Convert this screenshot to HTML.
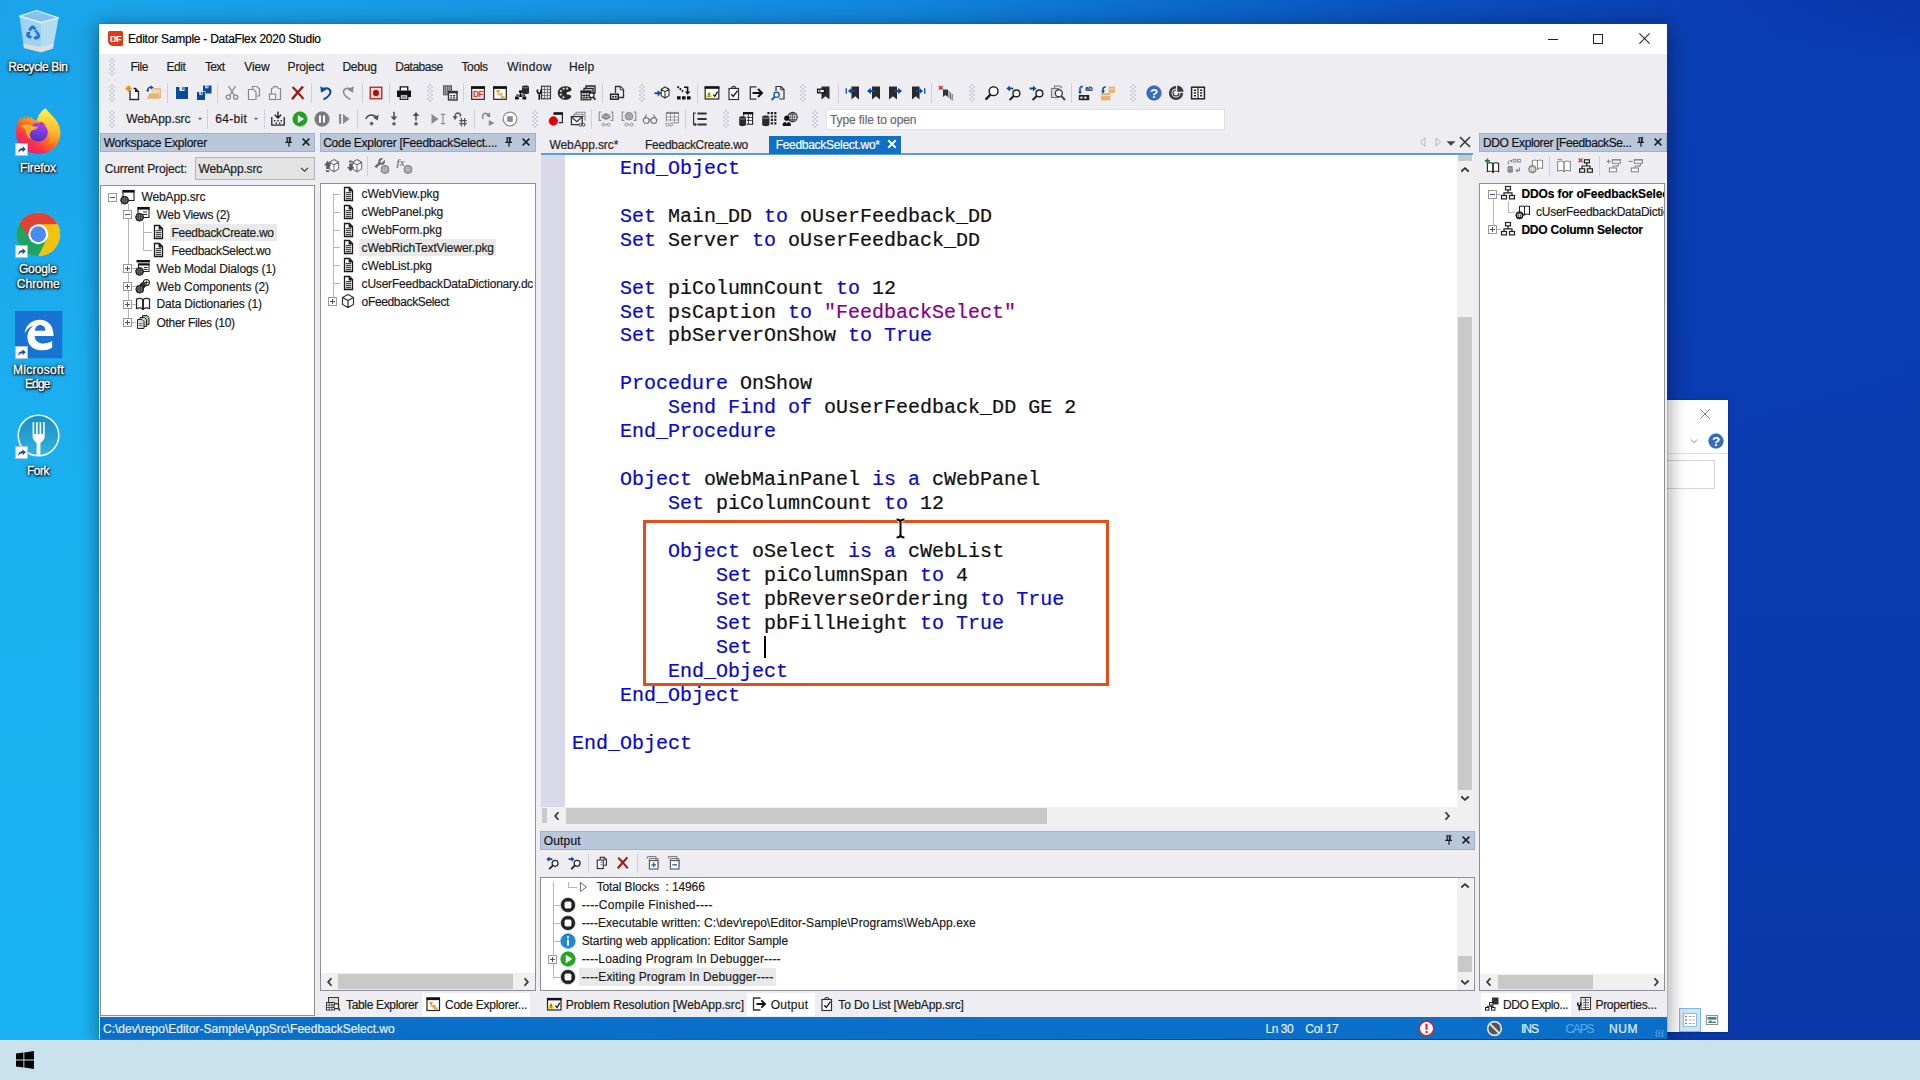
<!DOCTYPE html>
<html lang="en"><head><meta charset="utf-8"><title>Editor Sample - DataFlex 2020 Studio</title>
<style>
*{box-sizing:border-box;margin:0;padding:0}
html,body{width:1920px;height:1080px;overflow:hidden}
body{position:relative;font-family:"Liberation Sans",sans-serif;font-size:12px;color:#1a1a1a;
 background:#0b3fb4}
.b{position:absolute}
.t{position:absolute;white-space:nowrap;font-size:12px;-webkit-text-stroke:0.18px}
.ic{position:absolute;overflow:visible}
.code{position:absolute;font-family:"Liberation Mono",monospace;font-size:20px;line-height:23.967px;white-space:pre;color:#111;-webkit-text-stroke:0.22px}
.k{color:#0a0ac8}
.s{color:#8a008a}
.dl{color:#fff;font-size:12px;-webkit-text-stroke:0.35px;text-shadow:0 1px 2px #000,0 0 2px #000,1px 1px 2px rgba(0,0,0,.9),0 0 4px rgba(0,0,0,.6)}

</style></head>
<body>
<div class="b " style="left:0px;top:0px;width:1920px;height:1080px;background:linear-gradient(90deg,#1aa3e8 0px,#1aa5ea 100px,#1794e3 600px,#1286dc 900px,#0d72d0 1100px,#0a52be 1400px,#0a3eb2 1700px,#0a36aa 1920px)"></div>
<div class="b " style="left:0px;top:0px;width:300px;height:1080px;background:linear-gradient(180deg,rgba(30,170,236,0) 0,rgba(28,178,242,.9) 500px,rgba(26,180,244,1) 1080px)"></div>
<div class="b " style="left:1660px;top:0px;width:260px;height:1044px;background:linear-gradient(180deg,rgba(10,62,180,0) 0,rgba(10,62,180,.9) 70px,#0a3cb0 520px,#0a38a8 1044px)"></div>
<svg class="ic" style="left:18.5px;top:9.5px;width:40px;height:43px" viewBox="0 0 40 43"><path d="M0.6 6.1 L17.6 0.5 L39.5 7.9 L22 12.7 Z" fill="#86c2ea" stroke="#d4ecfa" stroke-width="1.3" stroke-linejoin="round"/><path d="M0.6 6.6 L22 13.2 L22 42.3 L5 37.9 Z" fill="#a2d2ef"/><path d="M22 13.2 L39.5 8.4 L33.9 38.6 L22 42.3 Z" fill="#b4dbf2"/><path d="M4 33.4 L22 37 L22 42.3 L5 37.9 Z" fill="#e6dcd8" opacity=".9"/><path d="M22 37 L34.8 33.6 L33.9 38.6 L22 42.3 Z" fill="#e2e0e2" opacity=".85"/><path d="M0.6 6.1 L22 12.7 L39.5 7.9" fill="none" stroke="#dcf0fb" stroke-width="1.5" stroke-linejoin="round"/><g fill="none" stroke="#1a74d6" stroke-width="2.8"><path d="M10.4 20.4 L12.6 17.4 Q13.8 16.4 15 17.8 L16.2 19.6"/><path d="M18.4 22.6 L19.6 25.6 Q19.8 27.6 17.8 27.8 L16 27.8"/><path d="M12.4 27.4 L9.6 26.6 Q8 25.8 8.8 24 L9.6 22.4"/></g><path d="M15 21.4 L18.6 19.4 L18.4 23.4 Z M17.2 25.4 L14.2 27.8 L17.2 30.2 Z M7.4 22.4 L11.4 21.6 L10.4 25.4 Z" fill="#1a74d6"/></svg>
<svg class="ic" style="left:15px;top:108px;width:46px;height:46px" viewBox="0 0 46 46"><defs><linearGradient id="ffg" x1=".85" y1=".05" x2=".2" y2=".95"><stop offset="0" stop-color="#fff44f"/><stop offset=".28" stop-color="#ffbd2e"/><stop offset=".52" stop-color="#ff7a1a"/><stop offset=".78" stop-color="#f8304a"/><stop offset="1" stop-color="#e81e8a"/></linearGradient><linearGradient id="ffp" x1=".6" y1="0" x2=".4" y2="1"><stop offset="0" stop-color="#c03af0"/><stop offset=".5" stop-color="#7a3ae0"/><stop offset="1" stop-color="#4a34b8"/></linearGradient><linearGradient id="ffy" x1=".5" y1="0" x2=".5" y2="1"><stop offset="0" stop-color="#fff44f"/><stop offset=".6" stop-color="#ffc02e"/><stop offset="1" stop-color="#ff8a1e" stop-opacity=".6"/></linearGradient></defs><path d="M30.4 0.2 C33 4 37 7 40 11 C44 16 46.5 22 45 29 C43 39 34 46 23 46 C11 46 1 37 1 25 C1 18 3 13 6 9 L7.5 11.5 L9.2 8 L11 11 L13 8 L14.6 10.8 L16.2 8.4 C17 11 19 12.4 22 12.6 C23 8 26 3 30.4 0.2 Z" fill="url(#ffg)"/><circle cx="23.3" cy="24" r="9.6" fill="url(#ffp)"/><path d="M30.4 0.2 C33 4 37 7 40 11 C44 16 45.5 22 44 28 C42 33 38 36 33 36 C35 32 35 24 31 19 C28 15 24 14 22 12.6 C23 8 26 3 30.4 0.2 Z" fill="url(#ffy)" opacity=".9"/><path d="M6 18 C10 16 15 16 18 18 C20 19 22 19 23.6 18.4 C22.4 21 19 21.4 17 22.6 C14 24.4 14.4 28 16 31 C12 29 10.4 25 10.8 22 C9.4 20.6 7.6 19.4 6 18 Z" fill="#ffb02a" opacity=".95"/><path d="M24 13.5 C27 13.6 30 15.2 31.4 17.6 C29.6 16.6 27.6 16.4 26.2 16.8 C26 15.4 25.2 14.2 24 13.5 Z" fill="#5a1a8a" opacity=".55"/></svg>
<svg class="ic" style="left:14.5px;top:143px;width:13px;height:13px" viewBox="0 0 12 12"><rect x=".5" y=".5" width="11" height="11" fill="#fff" stroke="#b8c4cc" stroke-width=".8"/><path d="M3 9.5 C3 6 4.6 4.8 7 4.8 V3 L10 5.8 L7 8.6 V6.8 C5.4 6.8 4.2 7.4 3 9.5 Z" fill="#1a4ea0"/></svg>
<svg class="ic" style="left:16px;top:212px;width:44.5px;height:44.5px" viewBox="0 0 44 44"><circle cx="22" cy="22" r="21.5" fill="#fff"/><path d="M3.38 11.25 A21.5 21.5 0 0 1 40.62 11.25 L22 22 Z" fill="#db4437"/><path d="M40.62 11.25 A21.5 21.5 0 0 1 22.00 43.50 L22 22 Z" fill="#f4c20d"/><path d="M22.00 43.50 A21.5 21.5 0 0 1 3.38 11.25 L22 22 Z" fill="#1da462"/><path d="M22 12.2 H40.9 A21.5 21.5 0 0 0 3.38 11.25 L13.51 26.90 Z" fill="#db4437"/><path d="M30.49 26.90 L22.00 43.50 A21.5 21.5 0 0 0 40.9 12.2 H22 Z" fill="#f4c20d"/><path d="M13.51 26.90 L3.38 11.25 A21.5 21.5 0 0 0 22.00 43.50 L30.49 26.90 Z" fill="#1da462"/><circle cx="22" cy="22" r="9.8" fill="#fff"/><circle cx="22" cy="22" r="7.8" fill="#4a8af4"/></svg>
<svg class="ic" style="left:14.5px;top:245px;width:13px;height:13px" viewBox="0 0 12 12"><rect x=".5" y=".5" width="11" height="11" fill="#fff" stroke="#b8c4cc" stroke-width=".8"/><path d="M3 9.5 C3 6 4.6 4.8 7 4.8 V3 L10 5.8 L7 8.6 V6.8 C5.4 6.8 4.2 7.4 3 9.5 Z" fill="#1a4ea0"/></svg>
<svg class="ic" style="left:14.8px;top:310.5px;width:47.2px;height:47.2px" viewBox="0 0 47 47"><rect width="47" height="47" fill="#1873d3"/><path d="M9.5 22.5 C11 12 18.5 8.6 24.6 8.6 C33 8.6 38.6 14.6 38.4 24.8 H19.6 C19.8 29.6 23.6 32.4 28.2 32.4 C31.6 32.4 34.6 31.4 37 30 V36.6 C34.2 38.2 30.6 39.2 26.2 39.2 C18 39.2 12.4 33.8 12.4 26 C12.4 21 15 17 18.6 14.6 C14.4 15.6 11.4 18.6 9.5 22.5 Z M19.8 19.6 H30.4 C30.2 16.2 28.2 14 25 14 C22 14 20.2 16.4 19.8 19.6 Z" fill="#fff"/></svg>
<svg class="ic" style="left:14.5px;top:346px;width:13px;height:13px" viewBox="0 0 12 12"><rect x=".5" y=".5" width="11" height="11" fill="#fff" stroke="#b8c4cc" stroke-width=".8"/><path d="M3 9.5 C3 6 4.6 4.8 7 4.8 V3 L10 5.8 L7 8.6 V6.8 C5.4 6.8 4.2 7.4 3 9.5 Z" fill="#1a4ea0"/></svg>
<svg class="ic" style="left:17.4px;top:413.5px;width:43px;height:43px" viewBox="0 0 43 43"><defs><linearGradient id="fkg" x1="0" y1="0" x2="0" y2="1"><stop offset="0" stop-color="#1a8ec4"/><stop offset="1" stop-color="#2fb4e0"/></linearGradient></defs><circle cx="21.5" cy="21.5" r="20.3" fill="url(#fkg)" stroke="#e8f6fc" stroke-width="1.6"/><path d="M15.6 8 h1.6 v12 h1.9 V8 h1.6 v12 h1.9 V8 h1.6 v12 h1.9 V8 h1.6 V22 C27.8 26.5 24 27.5 23.4 29.5 V42 H19.6 V29.5 C19 27.5 15.6 26.5 15.6 22 Z" fill="#fff"/></svg>
<svg class="ic" style="left:14.5px;top:446px;width:13px;height:13px" viewBox="0 0 12 12"><rect x=".5" y=".5" width="11" height="11" fill="#fff" stroke="#b8c4cc" stroke-width=".8"/><path d="M3 9.5 C3 6 4.6 4.8 7 4.8 V3 L10 5.8 L7 8.6 V6.8 C5.4 6.8 4.2 7.4 3 9.5 Z" fill="#1a4ea0"/></svg>
<div class="t dl" style="left:8.3px;top:60.05px;height:15px;line-height:15px;letter-spacing:-0.37px;">Recycle Bin</div>
<div class="t dl" style="left:20px;top:160.85px;height:15px;line-height:15px;letter-spacing:-0.11px;">Firefox</div>
<div class="t dl" style="left:18.9px;top:262.35px;height:15px;line-height:15px;letter-spacing:-0.12px;">Google</div>
<div class="t dl" style="left:16.7px;top:276.65px;height:15px;line-height:15px;letter-spacing:0.06px;">Chrome</div>
<div class="t dl" style="left:13px;top:363.35px;height:15px;line-height:15px;letter-spacing:0.28px;">Microsoft</div>
<div class="t dl" style="left:25px;top:377.35px;height:15px;line-height:15px;letter-spacing:-0.88px;">Edge</div>
<div class="t dl" style="left:26.9px;top:463.75px;height:15px;line-height:15px;letter-spacing:-0.43px;">Fork</div>
<div class="b " style="left:1667px;top:400px;width:60.5px;height:632px;background:#fff;box-shadow:0 0 3px rgba(0,0,40,.25)"></div>
<div class="b " style="left:1667px;top:453px;width:60.5px;height:1px;background:#e2e2e2"></div>
<div class="b " style="left:1667px;top:459.5px;width:48px;height:29px;background:#fff;border:1px solid #d4d4d4;border-left:0"></div>
<div class="b " style="left:1679px;top:1008px;width:22px;height:24px;background:#cfe6f7;border:1px solid #7ab8e6"></div>
<div class="b " style="left:99.3px;top:24.2px;width:1567.7px;height:1014.8px;background:#eeeef2;box-shadow:0 0 0 .5px rgba(10,90,180,.35),0 3px 18px 2px rgba(0,0,0,.38)"></div>
<div class="b " style="left:99.3px;top:24.2px;width:1567.7px;height:29.8px;background:#fff"></div>
<div class="t " style="left:128px;top:31.25px;height:16px;line-height:16px;color:#000;letter-spacing:-0.24px;">Editor Sample - DataFlex 2020 Studio</div>
<div class="t " style="left:130.4px;top:59.25px;height:16px;line-height:16px;color:#1a1a1a;letter-spacing:-0.45px;">File</div>
<div class="t " style="left:166.6px;top:59.25px;height:16px;line-height:16px;color:#1a1a1a;letter-spacing:-0.50px;">Edit</div>
<div class="t " style="left:204.9px;top:59.25px;height:16px;line-height:16px;color:#1a1a1a;letter-spacing:-0.61px;">Text</div>
<div class="t " style="left:244.3px;top:59.25px;height:16px;line-height:16px;color:#1a1a1a;letter-spacing:-0.17px;">View</div>
<div class="t " style="left:287.6px;top:59.25px;height:16px;line-height:16px;color:#1a1a1a;letter-spacing:-0.14px;">Project</div>
<div class="t " style="left:342.4px;top:59.25px;height:16px;line-height:16px;color:#1a1a1a;letter-spacing:-0.19px;">Debug</div>
<div class="t " style="left:395.3px;top:59.25px;height:16px;line-height:16px;color:#1a1a1a;letter-spacing:-0.51px;">Database</div>
<div class="t " style="left:461.4px;top:59.25px;height:16px;line-height:16px;color:#1a1a1a;letter-spacing:-0.33px;">Tools</div>
<div class="t " style="left:507.2px;top:59.25px;height:16px;line-height:16px;color:#1a1a1a;letter-spacing:0.30px;">Window</div>
<div class="t " style="left:569px;top:59.25px;height:16px;line-height:16px;color:#1a1a1a;letter-spacing:0.14px;">Help</div>
<div class="t " style="left:126.2px;top:111.45px;height:16px;line-height:16px;letter-spacing:-0.09px;">WebApp.src</div>
<div class="t " style="left:215.3px;top:111.45px;height:16px;line-height:16px;letter-spacing:0.29px;">64-bit</div>
<div class="b " style="left:826px;top:109px;width:399px;height:21px;background:#fff;border:1px solid #e0e0e6"></div>
<div class="t " style="left:830px;top:111.75px;height:16px;line-height:16px;color:#6a6a6a;letter-spacing:-0.10px;">Type file to open</div>
<div class="b " style="left:100px;top:1017px;width:1567px;height:22px;background:#0a6fc9"></div>
<div class="t " style="left:103px;top:1021.05px;height:16px;line-height:16px;color:#e6f1ff;letter-spacing:-0.01px;">C:\dev\repo\Editor-Sample\AppSrc\FeedbackSelect.wo</div>
<div class="t " style="left:1265.5px;top:1021.05px;height:16px;line-height:16px;color:#e6f1ff;letter-spacing:-0.46px;">Ln 30</div>
<div class="t " style="left:1305.2px;top:1021.05px;height:16px;line-height:16px;color:#e6f1ff;letter-spacing:-0.22px;">Col 17</div>
<div class="t " style="left:1521px;top:1021.05px;height:16px;line-height:16px;color:#e6f1ff;letter-spacing:-1.01px;">INS</div>
<div class="t " style="left:1565.4px;top:1021.05px;height:16px;line-height:16px;color:#58a6e6;letter-spacing:-1.20px;">CAPS</div>
<div class="t " style="left:1608.9px;top:1021.05px;height:16px;line-height:16px;color:#e6f1ff;letter-spacing:0.59px;">NUM</div>
<div class="b " style="left:109px;top:84px;width:6px;height:18px;background:repeating-conic-gradient(#cfcfd8 0 25%,transparent 0 50%) 0 0/4px 4px"></div>
<svg class="ic" style="left:124.9px;top:84.5px;width:16px;height:16px" viewBox="0 0 16 16" ><rect x="5" y="4" width="9" height="10.5" fill="#fff"/><path d="M5 5.5 V14.5 H13.5 V6.5 L10.5 3.5 H8.5" fill="none" stroke="#2a2a2a" stroke-width="1.3" /><path d="M10 3 L14 7 H10 Z" fill="#111" /><circle cx="3.6" cy="3.6" r="1.9" fill="#e89a3c" stroke="#e08a2a" stroke-width="0.6"/><path d="M3.6 0.4 V6.8 M0.4 3.6 H6.8 M1.3 1.3 L5.9 5.9 M5.9 1.3 L1.3 5.9" fill="none" stroke="#e08a2a" stroke-width="1" /></svg>
<svg class="ic" style="left:146.3px;top:84.5px;width:16px;height:16px" viewBox="0 0 16 16" ><path d="M5.5 3.5 H14.5 V13.5 H5.5 Z" fill="#f0d5ae" /><path d="M6.5 3.8 H14.3 V13.2" fill="none" stroke="#e0b070" stroke-width="1" /><path d="M0.8 13.8 L3.2 8.6 H12.2 L14.2 13.8 Z" fill="#e3b577" /><path d="M1.6 5.6 C1.6 2.6 4 1.8 5.6 2.4" fill="none" stroke="#0a4a9e" stroke-width="1.5" /><path d="M4.6 0.3 L7.6 2.5 L4.6 4.6 Z" fill="#0a4a9e" /><path d="M0.2 5 H3.2 L1.7 7.2 Z" fill="#0a4a9e" /></svg>
<div class="b " style="left:167px;top:83px;width:1px;height:20px;background:#d0d0d8"></div>
<svg class="ic" style="left:174.4px;top:84.5px;width:16px;height:16px" viewBox="0 0 16 16" ><path d="M2 2 H5.5 V6 H10.5 V2 H14 V14 H2 Z M8.2 2 H9.5 V5 H8.2 Z" fill="#0a4a9e" /></svg>
<svg class="ic" style="left:196px;top:84.5px;width:16px;height:16px" viewBox="0 0 16 16" ><path d="M7 0.5 H9.2 V3.2 H12.4 V0.5 H15.5 V8.5 H7 Z M10.6 0.5 H11.6 V2.4 H10.6 Z" fill="#0a4a9e" /><rect x="0.2" y="6.2" width="9.3" height="9.6" fill="#eeeef2"/><path d="M1 7 H3.2 V9.8 H6.6 V7 H9 V15 H1 Z M4.8 7 H5.8 V9 H4.8 Z" fill="#0a4a9e" /></svg>
<div class="b " style="left:217px;top:83px;width:1px;height:20px;background:#d0d0d8"></div>
<svg class="ic" style="left:224.2px;top:84.5px;width:16px;height:16px" viewBox="0 0 16 16" ><path d="M4.5 1 L10.2 10.2 M11.5 1 L5.8 10.2" fill="none" stroke="#8a8a8a" stroke-width="1.3" /><circle cx="4.3" cy="12.2" r="2.1" fill="none" stroke="#8a8a8a" stroke-width="1.3"/><circle cx="11.7" cy="12.2" r="2.1" fill="none" stroke="#8a8a8a" stroke-width="1.3"/></svg>
<svg class="ic" style="left:246.1px;top:84.5px;width:16px;height:16px" viewBox="0 0 16 16" ><path d="M6.5 4 V1.5 H11 L13.5 4 V11 H10.5" fill="none" stroke="#8a8a8a" stroke-width="1.2" /><rect x="3" y="4.5" width="7" height="10" fill="#f4f4f6"/><path d="M2.5 4.5 H7.5 L10 7 V14.5 H2.5 Z" fill="none" stroke="#8a8a8a" stroke-width="1.2" /></svg>
<svg class="ic" style="left:266.9px;top:84.5px;width:16px;height:16px" viewBox="0 0 16 16" ><path d="M5.5 3.5 H4.5 V9 M11.5 3.5 H13.5 V14.5 H9.5" fill="none" stroke="#8a8a8a" stroke-width="1.2" /><path d="M6 3.5 C6 0.6 11 0.6 11 3.5" fill="none" stroke="#8a8a8a" stroke-width="1.2" /><rect x="2.5" y="9" width="6" height="5.5" fill="#f4f4f6" stroke="#8a8a8a" stroke-width="1.2"/></svg>
<svg class="ic" style="left:289.7px;top:84.5px;width:16px;height:16px" viewBox="0 0 16 16" ><path d="M2.5 2 C6 5 10 10 13.5 14" fill="none" stroke="#a01414" stroke-width="2.2" /><path d="M13 1.5 C10 5 5.5 10 2 14.2" fill="none" stroke="#a01414" stroke-width="2.4" /></svg>
<div class="b " style="left:311px;top:83px;width:1px;height:20px;background:#d0d0d8"></div>
<svg class="ic" style="left:318.4px;top:84.5px;width:16px;height:16px" viewBox="0 0 16 16" ><path d="M4.2 4.6 C8 2.2 12.6 3.4 12.4 7.2 C12.2 10.4 9 12.6 5.5 14.4" fill="none" stroke="#0a4a9e" stroke-width="2" /><path d="M2.3 1.2 L3 7.8 L8.6 4.6 Z" fill="#0a4a9e" /></svg>
<svg class="ic" style="left:340.3px;top:84.5px;width:16px;height:16px" viewBox="0 0 16 16" ><path d="M11.8 4.6 C8 2.2 3.4 3.4 3.6 7.2 C3.8 10.4 7 12.6 10.5 14.4" fill="none" stroke="#8a8a8a" stroke-width="1.6" /><path d="M13.7 1.2 L13 7.8 L7.4 4.6 Z" fill="#8a8a8a" /></svg>
<div class="b " style="left:361.5px;top:83px;width:1px;height:20px;background:#d0d0d8"></div>
<svg class="ic" style="left:368.4px;top:84.5px;width:16px;height:16px" viewBox="0 0 16 16" ><rect x="2.2" y="2.2" width="11.6" height="11.6" fill="#f3d6d6" stroke="#a01414" stroke-width="1.2"/><circle cx="8" cy="8" r="2.9" fill="#a01414" stroke="#a01414" stroke-width="0.5"/></svg>
<div class="b " style="left:389.2px;top:83px;width:1px;height:20px;background:#d0d0d8"></div>
<svg class="ic" style="left:396.3px;top:84.5px;width:16px;height:16px" viewBox="0 0 16 16" ><rect x="4" y="1.5" width="8" height="4" fill="#fff"/><path d="M4.3 5.5 V1.8 H11.7 V5.5" fill="none" stroke="#111" stroke-width="1.3" /><path d="M1 5.5 H15 V12 H12 V9.5 H4 V12 H1 Z" fill="#111" /><rect x="4.2" y="9.7" width="7.6" height="4.6" fill="#fff" stroke="#111" stroke-width="1.2"/><path d="M5.5 12 H10.5" fill="none" stroke="#111" stroke-width="0.9" /></svg>
<div class="b " style="left:426.6px;top:84px;width:6px;height:18px;background:repeating-conic-gradient(#cfcfd8 0 25%,transparent 0 50%) 0 0/4px 4px"></div>
<svg class="ic" style="left:442.1px;top:84.5px;width:16px;height:16px" viewBox="0 0 16 16" ><rect x="1.5" y="0.8" width="8" height="9" fill="#9a9a9a" stroke="#555" stroke-width="1"/><path d="M3.5 1 V9.5 M5.5 1 V9.5 M7.5 1 V9.5" fill="none" stroke="#666" stroke-width="0.7" /><rect x="6.5" y="6.5" width="8.5" height="8.5" fill="#fff" stroke="#333" stroke-width="1.4"/><rect x="6" y="6" width="9.5" height="2.4" fill="#333"/><rect x="8.3" y="10" width="1.8" height="1.4" fill="#333"/><rect x="11" y="10" width="2.2" height="1.4" fill="#333"/><rect x="8.3" y="12.3" width="1.8" height="1.4" fill="#333"/><rect x="11" y="12.3" width="2.2" height="1.4" fill="#333"/></svg>
<div class="b " style="left:463.1px;top:83px;width:1px;height:20px;background:#d0d0d8"></div>
<svg class="ic" style="left:470.2px;top:84.5px;width:16px;height:16px" viewBox="0 0 16 16" ><rect x="1.7" y="2" width="12.6" height="12.3" fill="#fff" stroke="#222" stroke-width="1.2"/><rect x="1" y="1.3" width="14" height="2.6" fill="#111"/><rect x="3" y="5" width="10" height="8" fill="#fbe4dc"/><text x="8" y="12" text-anchor="middle" font-family="Liberation Sans,sans-serif" font-weight="bold" font-size="8.5" fill="#e03a14" letter-spacing="-0.6">DF</text></svg>
<svg class="ic" style="left:491.9px;top:84.5px;width:16px;height:16px" viewBox="0 0 16 16" ><rect x="1.7" y="2" width="12.6" height="12.3" fill="#fff" stroke="#222" stroke-width="1.2"/><rect x="1" y="1.3" width="14" height="2.6" fill="#111"/><path d="M4.5 5 h3.2v2.6h-3.2z M7.6 8.2 h3v2.4h-3z M10.2 11.2h2.4v2h-2.4z" fill="#e8a038" /><path d="M6 7.6 V9.4 H7.6 M9 10.6 V12.2 H10.2" fill="none" stroke="#c07818" stroke-width="0.8" /></svg>
<svg class="ic" style="left:513.8px;top:84.5px;width:16px;height:16px" viewBox="0 0 16 16" ><path d="M8 1.5 C8 0 15 0 15 1.5 V8 C15 9.5 8 9.5 8 8 Z" fill="#2a2a2a" /><path d="M8.3 2 C9 3.2 14 3.2 14.7 2" fill="none" stroke="#aaa" stroke-width="0.7" /><rect x="5" y="5.3" width="3.2" height="2.6" fill="#111"/><path d="M6.6 8 V10 M3 11.5 V10 H10.3 V11.5" fill="none" stroke="#111" stroke-width="1.1" /><path d="M1 11.5 h3.8v3h-3.8z M8.4 11.5 h3.8v3h-3.8z" fill="#111" /><path d="M4.8 12 L6.6 9 L8.4 12 Z" fill="#111" /></svg>
<svg class="ic" style="left:535.8px;top:84.5px;width:16px;height:16px" viewBox="0 0 16 16" ><rect x="5.5" y="1.2" width="9" height="12.6" fill="#e6e6e6" stroke="#333" stroke-width="1.1"/><path d="M8.5 1.2 V13.8 M11.5 1.2 V13.8 M5.5 4.5 H14.5 M5.5 7.5 H14.5 M5.5 10.5 H14.5" fill="none" stroke="#555" stroke-width="0.7" /><path d="M1.6 4.5 C0.8 7 2 8.2 3.3 8.6 V14.8 M3.3 8.6 C4.8 8.2 5.6 7 4.8 4.5" fill="none" stroke="#111" stroke-width="1.7" /></svg>
<svg class="ic" style="left:557.4px;top:84.5px;width:16px;height:16px" viewBox="0 0 16 16" ><path d="M8.2 1.2 C2.5 1.2 0.8 5.5 0.8 8 C0.8 11.5 4 14.8 8.2 14.8 C11 14.8 13.2 13.6 14 12.2 C14.6 11 13.4 9.6 12 9.8 C10.4 10 9.4 9.2 9.6 8 C9.8 6.8 11.4 7 12.6 6.6 C14.8 5.8 15 4.4 14 3.2 C12.8 1.8 10.6 1.2 8.2 1.2 Z" fill="#2a2a2a" /><circle cx="4" cy="6" r="1" fill="#ddd" stroke="#ddd" stroke-width="0.2"/><circle cx="6.6" cy="3.8" r="1" fill="#ddd" stroke="#ddd" stroke-width="0.2"/><circle cx="10" cy="3.6" r="1" fill="#ddd" stroke="#ddd" stroke-width="0.2"/><circle cx="3.8" cy="9.6" r="1" fill="#ddd" stroke="#ddd" stroke-width="0.2"/><circle cx="6.4" cy="12.2" r="1" fill="#ddd" stroke="#ddd" stroke-width="0.2"/></svg>
<svg class="ic" style="left:579.9px;top:84.5px;width:16px;height:16px" viewBox="0 0 16 16" ><path d="M6 3 V1 H15 V8 H13.5" fill="none" stroke="#222" stroke-width="1.3" /><path d="M4 5.5 V3.5 H13 V10" fill="none" stroke="#222" stroke-width="1.3" /><rect x="1.2" y="6.2" width="9.6" height="8.6" fill="#ddd" stroke="#222" stroke-width="1.2"/><rect x="0.6" y="5.6" width="10.8" height="2.4" fill="#222"/><path d="M4 8 V14.8 M6.8 8 V14.8 M1.2 10.5 H10.8 M1.2 12.7 H10.8" fill="none" stroke="#222" stroke-width="0.8" /><circle cx="11.6" cy="10.2" r="2.4" fill="#fff" stroke="#222" stroke-width="1.2"/><path d="M13.2 12 L15.4 14.8" fill="none" stroke="#222" stroke-width="1.7" /></svg>
<div class="b " style="left:601.5px;top:83px;width:1px;height:20px;background:#d0d0d8"></div>
<svg class="ic" style="left:608.9px;top:84.5px;width:16px;height:16px" viewBox="0 0 16 16" ><path d="M6.5 8 V1.5 H11.5 L14.5 4.5 V12.5 H10" fill="none" stroke="#333" stroke-width="1.3" /><path d="M11 1.5 V5 H14.5" fill="#fff" /><path d="M11.3 1.8 V4.8 H14.2" fill="none" stroke="#333" stroke-width="1" /><rect x="1.6" y="9.2" width="7.6" height="5" fill="#fff" stroke="#111" stroke-width="1.4"/><rect x="3.2" y="10.8" width="1.8" height="1.8" fill="#111"/><rect x="5.8" y="10.8" width="1.8" height="1.8" fill="#111"/></svg>
<div class="b " style="left:639px;top:84px;width:6px;height:18px;background:repeating-conic-gradient(#cfcfd8 0 25%,transparent 0 50%) 0 0/4px 4px"></div>
<svg class="ic" style="left:654px;top:84.5px;width:16px;height:16px" viewBox="0 0 16 16" ><path d="M0.5 8.2 H4.8" fill="none" stroke="#0a4a9e" stroke-width="1.8" /><path d="M3.6 5 L7.2 8.2 L3.6 11.4 Z" fill="#0a4a9e" /><rect x="8" y="4" width="7" height="9" fill="#fff"/><path d="M11 2 L15 4.2 V10.6 L11 13 L7.2 10.6 V4.2 Z M7.2 4.2 L11 6.6 L15 4.2 M11 6.6 V13" fill="none" stroke="#333" stroke-width="1.1" /></svg>
<svg class="ic" style="left:675.9px;top:84.5px;width:16px;height:16px" viewBox="0 0 16 16" ><path d="M1.5 1.5 L7 6.5" fill="none" stroke="#111" stroke-width="1.8" stroke-dasharray="1.8 1.2"/><path d="M8 2.2 H11.6 V7.5" fill="none" stroke="#111" stroke-width="1.6" /><path d="M8.8 6.6 H14.4 L11.6 9.8 Z" fill="#111" /><path d="M1 11.2 h3.6v3.2h-3.6z M6 11.2 h3.6v3.2h-3.6z M11 11.2 h3.6v3.2h-3.6z" fill="#111" /></svg>
<div class="b " style="left:697px;top:83px;width:1px;height:20px;background:#d0d0d8"></div>
<svg class="ic" style="left:704px;top:84.5px;width:16px;height:16px" viewBox="0 0 16 16" ><rect x="1.2" y="2" width="13.6" height="12" fill="#fff" stroke="#222" stroke-width="1.2"/><rect x="0.6" y="1.4" width="14.8" height="2.4" fill="#111"/><path d="M5 6 L8.4 12.6 H1.6 Z" fill="#f2d220" /><path d="M5 8.2 V10.4 M5 11.1 V12" fill="none" stroke="#222" stroke-width="1" /><path d="M9.2 9.6 L10.8 11.4 L13.6 6.6" fill="none" stroke="#222" stroke-width="1.4" /></svg>
<svg class="ic" style="left:726px;top:84.5px;width:16px;height:16px" viewBox="0 0 16 16" ><rect x="3" y="3.5" width="9.5" height="11" fill="#fff" stroke="#333" stroke-width="1.2"/><path d="M5.6 3.5 C5.6 0.7 9.9 0.7 9.9 3.5" fill="none" stroke="#333" stroke-width="1.2" /><path d="M5.3 9.3 L7.2 11.4 L11.6 5.6" fill="none" stroke="#222" stroke-width="1.5" /></svg>
<svg class="ic" style="left:747.6px;top:84.5px;width:16px;height:16px" viewBox="0 0 16 16" ><path d="M8.5 1.8 H2.3 V14.2 H8.5" fill="none" stroke="#333" stroke-width="1.3" /><path d="M4.5 8 H13.5 M10 4 L14 8 L10 12" fill="none" stroke="#111" stroke-width="2" /></svg>
<svg class="ic" style="left:769.6px;top:84.5px;width:16px;height:16px" viewBox="0 0 16 16" ><path d="M6 6 V1.5 H11 L14 4.5 V14 H9" fill="none" stroke="#333" stroke-width="1.2" /><path d="M10.8 1.8 V4.8 H13.8" fill="none" stroke="#333" stroke-width="1" /><circle cx="6.6" cy="9.8" r="2.6" fill="#fff" stroke="#1858b0" stroke-width="1.4"/><path d="M4.7 11.8 L1.6 15" fill="none" stroke="#1858b0" stroke-width="1.8" /></svg>
<div class="b " style="left:800.4px;top:84px;width:6px;height:18px;background:repeating-conic-gradient(#cfcfd8 0 25%,transparent 0 50%) 0 0/4px 4px"></div>
<svg class="ic" style="left:816px;top:84.5px;width:16px;height:16px" viewBox="0 0 16 16" ><path d="M5.5 1.5 H13.5 V14.5 L9.5 11.2 L5.5 14.5 Z" fill="#2a2a2a" /><rect x="1.6" y="4.2" width="6.8" height="3.6" fill="#fff" stroke="#111" stroke-width="1.3"/><rect x="3.2" y="5.2" width="1.2" height="1.6" fill="#111"/></svg>
<div class="b " style="left:837.5px;top:83px;width:1px;height:20px;background:#d0d0d8"></div>
<svg class="ic" style="left:844.5px;top:84.5px;width:16px;height:16px" viewBox="0 0 16 16" ><path d="M6.5 1.5 H14 V14.5 L10.2 11.2 L6.5 14.5 Z" fill="#2a2a2a" /><rect x="0.6" y="3.2" width="1.3" height="5.6" fill="#0a4a9e"/><path d="M3 6 L6.4 3 V4.9 H10 V7.1 H6.4 V9 Z" fill="#0a4a9e" /></svg>
<svg class="ic" style="left:866.4px;top:84.5px;width:16px;height:16px" viewBox="0 0 16 16" ><path d="M6 1.5 H14 V14.5 L10 11.2 L6 14.5 Z" fill="#2a2a2a" /><path d="M1 6 L4.8 2.8 V4.9 H9 V7.1 H4.8 V9.2 Z" fill="#0a4a9e" /></svg>
<svg class="ic" style="left:887.4px;top:84.5px;width:16px;height:16px" viewBox="0 0 16 16" ><path d="M2 1.5 H10 V14.5 L6 11.2 L2 14.5 Z" fill="#2a2a2a" /><path d="M15 6 L11.2 2.8 V4.9 H7 V7.1 H11.2 V9.2 Z" fill="#0a4a9e" /></svg>
<svg class="ic" style="left:909.7px;top:84.5px;width:16px;height:16px" viewBox="0 0 16 16" ><path d="M2 1.5 H9.5 V14.5 L5.8 11.2 L2 14.5 Z" fill="#2a2a2a" /><rect x="14.1" y="3.2" width="1.3" height="5.6" fill="#0a4a9e"/><path d="M13 6 L9.6 3 V4.9 H6 V7.1 H9.6 V9 Z" fill="#0a4a9e" /></svg>
<div class="b " style="left:931.1px;top:83px;width:1px;height:20px;background:#d0d0d8"></div>
<svg class="ic" style="left:938.1px;top:84.5px;width:16px;height:16px" viewBox="0 0 16 16" ><path d="M1 1 L4.6 4.6 M4.6 1 L1 4.6" fill="none" stroke="#d02020" stroke-width="1.4" /><path d="M5 4.5 H10 V12 L7.5 10 L5 12 Z" fill="#333" /><path d="M11 6 V13 M12.6 7.5 V14.5 M14.2 9 V15.5" fill="none" stroke="#555" stroke-width="0.9" /></svg>
<div class="b " style="left:969px;top:84px;width:6px;height:18px;background:repeating-conic-gradient(#cfcfd8 0 25%,transparent 0 50%) 0 0/4px 4px"></div>
<svg class="ic" style="left:984px;top:84.5px;width:16px;height:16px" viewBox="0 0 16 16" ><circle cx="9.6" cy="6.2" r="4.4" fill="#fff" stroke="#222" stroke-width="1.5"/><path d="M6.6 9.4 L1.6 14.6" fill="none" stroke="#222" stroke-width="2.4" /></svg>
<svg class="ic" style="left:1005.9px;top:84.5px;width:16px;height:16px" viewBox="0 0 16 16" ><circle cx="10.4" cy="8.4" r="3.4" fill="#fff" stroke="#222" stroke-width="1.4"/><path d="M8.0 10.8 L3.6 15" fill="none" stroke="#222" stroke-width="2" /><path d="M0.4 3.6 L3.8 0.6 V2.6 H7.2 V4.6 H3.8 V6.6 Z" fill="#0a4a9e" /></svg>
<svg class="ic" style="left:1028.5px;top:84.5px;width:16px;height:16px" viewBox="0 0 16 16" ><circle cx="10.4" cy="8.4" r="3.4" fill="#fff" stroke="#222" stroke-width="1.4"/><path d="M8.0 10.8 L3.6 15" fill="none" stroke="#222" stroke-width="2" /><path d="M7.4 3.6 L4 0.6 V2.6 H0.6 V4.6 H4 V6.6 Z" fill="#0a4a9e" /></svg>
<svg class="ic" style="left:1049.8px;top:84.5px;width:16px;height:16px" viewBox="0 0 16 16" ><path d="M4.5 3 V1 H10 L12 3" fill="none" stroke="#777" stroke-width="1.1" /><rect x="1.5" y="3.5" width="7" height="9" fill="#ddd" stroke="#777" stroke-width="1.1"/><circle cx="8.8" cy="8.2" r="3.5" fill="#fff" stroke="#444" stroke-width="1.4"/><path d="M11.2 10.8 L15 15" fill="none" stroke="#444" stroke-width="2" /></svg>
<div class="b " style="left:1070.9px;top:83px;width:1px;height:20px;background:#d0d0d8"></div>
<svg class="ic" style="left:1077.6px;top:84.5px;width:16px;height:16px" viewBox="0 0 16 16" ><path d="M2 8 V3.6 C2 2 3 1.6 5 1.6" fill="none" stroke="#0a4a9e" stroke-width="1.5" /><path d="M0 6.6 H4 L2 9.2 Z" fill="#0a4a9e" /><text x="11" y="6.4" text-anchor="middle" font-family="Liberation Sans,sans-serif" font-weight="bold" font-size="6.6" fill="#222">ab</text><rect x="0.8" y="10" width="10.4" height="5.2" fill="#222"/><rect x="2.4" y="11.6" width="2.2" height="2" fill="#eee"/><rect x="6.2" y="11.6" width="2.4" height="2" fill="#eee"/></svg>
<svg class="ic" style="left:1100.2px;top:84.5px;width:16px;height:16px" viewBox="0 0 16 16" ><path d="M8.5 1.5 H15 V8 H8.5 Z" fill="#e3b577" /><path d="M1 8 H10.5 V15.5 H1 Z" fill="#e3b577" /><path d="M8.5 4 H15 M1 10.5 H10.5" fill="none" stroke="#f3dcb8" stroke-width="0.9" /><path d="M3 7 V4.2 C3 2.6 4 2 5.8 2" fill="none" stroke="#0a4a9e" stroke-width="1.5" /><path d="M1 5.8 H5 L3 8.4 Z" fill="#0a4a9e" /></svg>
<div class="b " style="left:1130.4px;top:84px;width:6px;height:18px;background:repeating-conic-gradient(#cfcfd8 0 25%,transparent 0 50%) 0 0/4px 4px"></div>
<svg class="ic" style="left:1145.7px;top:84.5px;width:16px;height:16px" viewBox="0 0 16 16" ><circle cx="8" cy="8" r="7.3" fill="#3a6cbe" stroke="#2b5fb0" stroke-width="0.6"/><text x="8" y="13" text-anchor="middle" font-family="Liberation Sans,sans-serif" font-weight="bold" font-size="13.5" fill="#fff">?</text></svg>
<svg class="ic" style="left:1168px;top:84.5px;width:16px;height:16px" viewBox="0 0 16 16" ><path d="M8 2.2 A5.8 5.8 0 1 0 13.8 8" fill="none" stroke="#3a3a3a" stroke-width="2.6" /><path d="M8 5 A3 3 0 1 0 11 8" fill="none" stroke="#3a3a3a" stroke-width="1.2" /><path d="M9.2 0.6 A6.2 6.2 0 0 1 15.4 6.8 H9.2 Z" fill="#3a3a3a" /></svg>
<svg class="ic" style="left:1190px;top:84.5px;width:16px;height:16px" viewBox="0 0 16 16" ><rect x="1.6" y="2.2" width="12.8" height="11.6" fill="#fff" stroke="#222" stroke-width="1.5"/><path d="M8 2.2 V13.8" fill="none" stroke="#222" stroke-width="1.2" /><path d="M3.8 5.2 H6 M3.8 8 H6 M3.8 10.8 H6 M10 5.2 H12.2 M10 8 H12.2 M10 10.8 H12.2" fill="none" stroke="#222" stroke-width="1.5" /></svg>
<div class="b " style="left:109px;top:58px;width:6px;height:18px;background:repeating-conic-gradient(#cfcfd8 0 25%,transparent 0 50%) 0 0/4px 4px"></div>
<div class="b " style="left:109px;top:110px;width:6px;height:18px;background:repeating-conic-gradient(#cfcfd8 0 25%,transparent 0 50%) 0 0/4px 4px"></div>
<svg class="ic" style="left:194.8px;top:113.5px;width:10px;height:10px" viewBox="0 0 16 16" ><path d="M4.5 6 H11.5 L8 10 Z" fill="#6a6a6a" /></svg>
<div class="b " style="left:207.2px;top:109px;width:1px;height:20px;background:#d0d0d8"></div>
<svg class="ic" style="left:250.5px;top:113.5px;width:10px;height:10px" viewBox="0 0 16 16" ><path d="M4.5 6 H11.5 L8 10 Z" fill="#6a6a6a" /></svg>
<div class="b " style="left:263.5px;top:109px;width:1px;height:20px;background:#d0d0d8"></div>
<svg class="ic" style="left:269.7px;top:110.5px;width:16px;height:16px" viewBox="0 0 16 16" ><path d="M8 0.5 V6.5 M4.8 3.8 L8 7 L11.2 3.8" fill="none" stroke="#222" stroke-width="1.4" /><path d="M1.8 6 V14.2 H14.2 V6" fill="none" stroke="#222" stroke-width="1.3" /><path d="M4 9h1.4v1.4H4z M7.3 9h1.4v1.4H7.3z M10.6 9h1.4v1.4h-1.4z M5.6 11.5h1.4v1.4H5.6z M9 11.5h1.4v1.4H9z" fill="#222" /></svg>
<svg class="ic" style="left:292.2px;top:110.5px;width:16px;height:16px" viewBox="0 0 16 16" ><circle cx="8" cy="8" r="7.2" fill="#22a022" stroke="#1a9a1a" stroke-width="0.6"/><path d="M5.8 4 L12 8 L5.8 12 Z" fill="#fff" /></svg>
<svg class="ic" style="left:314.2px;top:110.5px;width:16px;height:16px" viewBox="0 0 16 16" ><circle cx="8" cy="8" r="7.4" fill="#7a7a7a" stroke="#7a7a7a" stroke-width="0.4"/><rect x="5" y="4.4" width="2" height="7.2" fill="#fff"/><rect x="9" y="4.4" width="2" height="7.2" fill="#fff"/></svg>
<svg class="ic" style="left:336.1px;top:110.5px;width:16px;height:16px" viewBox="0 0 16 16" ><rect x="3" y="3" width="2.2" height="10" fill="#8a8a8a"/><path d="M7 3 L13.5 8 L7 13 Z" fill="#8a8a8a" /></svg>
<div class="b " style="left:356.8px;top:109px;width:1px;height:20px;background:#d0d0d8"></div>
<svg class="ic" style="left:364.2px;top:110.5px;width:16px;height:16px" viewBox="0 0 16 16" ><path d="M2 8.2 C3 3.4 10.4 2.6 12.4 7" fill="none" stroke="#555" stroke-width="1.6" /><path d="M14.6 3.8 L13.8 9.6 L9 6.8 Z" fill="#555" /><circle cx="7.6" cy="12.6" r="1.5" fill="#555" stroke="#555" stroke-width="0.4"/></svg>
<svg class="ic" style="left:385.9px;top:110.5px;width:16px;height:16px" viewBox="0 0 16 16" ><path d="M8 0.8 V8" fill="none" stroke="#555" stroke-width="1.6" /><path d="M4.6 5.6 H11.4 L8 9.6 Z" fill="#555" /><circle cx="8" cy="12.8" r="1.5" fill="#555" stroke="#555" stroke-width="0.4"/></svg>
<svg class="ic" style="left:408.1px;top:110.5px;width:16px;height:16px" viewBox="0 0 16 16" ><path d="M8 9.4 V2.6" fill="none" stroke="#555" stroke-width="1.6" /><path d="M4.6 5 H11.4 L8 1 Z" fill="#555" /><circle cx="8" cy="12.8" r="1.5" fill="#555" stroke="#555" stroke-width="0.4"/></svg>
<svg class="ic" style="left:430.9px;top:110.5px;width:16px;height:16px" viewBox="0 0 16 16" ><path d="M0.5 3 L7.5 8 L0.5 13 Z" fill="#8a8a8a" /><path d="M9.8 3.4 H14.2 M9.8 12.6 H14.2 M12 3.4 V12.6" fill="none" stroke="#8a8a8a" stroke-width="1.1" /></svg>
<svg class="ic" style="left:452px;top:110.5px;width:16px;height:16px" viewBox="0 0 16 16" ><path d="M3.2 6.6 C2.2 3.4 5 1 7.4 2.4 C8.6 3.2 8.8 4.6 8.2 5.6" fill="none" stroke="#555" stroke-width="1.5" /><path d="M0.6 5 L5.6 5.4 L3 9 Z" fill="#555" /><path d="M9.4 7 V15.2 M12.6 7 V15.2 M7.4 9.6 H14.8 M7.4 12.6 H14.8" fill="none" stroke="#555" stroke-width="1.2" /></svg>
<div class="b " style="left:473.5px;top:109px;width:1px;height:20px;background:#d0d0d8"></div>
<svg class="ic" style="left:479.5px;top:110.5px;width:16px;height:16px" viewBox="0 0 16 16" ><path d="M3.2 8 C1.4 4 4 1.4 7 2.6 C8.6 3.4 9 4.6 8.6 6" fill="none" stroke="#8a8a8a" stroke-width="1.5" /><path d="M10 1.2 L10.2 6.4 L5.8 4.4 Z" fill="#8a8a8a" /><path d="M8.8 9 L14.4 12 L8.8 15 Z" fill="#8a8a8a" /></svg>
<svg class="ic" style="left:502px;top:110.5px;width:16px;height:16px" viewBox="0 0 16 16" ><circle cx="8" cy="8" r="6.8" fill="#fff" stroke="#8a8a8a" stroke-width="1.2"/><rect x="5.2" y="5.2" width="5.6" height="5.6" fill="#8a8a8a"/></svg>
<div class="b " style="left:532.3px;top:110px;width:6px;height:18px;background:repeating-conic-gradient(#cfcfd8 0 25%,transparent 0 50%) 0 0/4px 4px"></div>
<svg class="ic" style="left:547.6px;top:110.5px;width:16px;height:16px" viewBox="0 0 16 16" ><path d="M6 2.2 H14.4 V11.6 H11" fill="none" stroke="#222" stroke-width="1.2" /><rect x="5.4" y="1.4" width="9.6" height="2.4" fill="#111"/><circle cx="5.4" cy="10" r="4.4" fill="#e00000" stroke="#d80000" stroke-width="0.5"/></svg>
<svg class="ic" style="left:570px;top:110.5px;width:16px;height:16px" viewBox="0 0 16 16" ><path d="M6 3 V1.2 H15 V9.6" fill="none" stroke="#8a8a8a" stroke-width="1.1" /><path d="M4 5 V3.2 H13 V6" fill="none" stroke="#8a8a8a" stroke-width="1.1" /><rect x="1.4" y="5.6" width="10.8" height="8" fill="#f4f4f6" stroke="#333" stroke-width="1.3"/><path d="M1.6 6 L6.8 10.6 L12 6" fill="none" stroke="#333" stroke-width="1.2" /><circle cx="10.4" cy="13.8" r="1.4" fill="#eee" stroke="#333" stroke-width="0.9"/><circle cx="13.6" cy="13.8" r="1.4" fill="#eee" stroke="#333" stroke-width="0.9"/></svg>
<div class="b " style="left:591.1px;top:109px;width:1px;height:20px;background:#d0d0d8"></div>
<svg class="ic" style="left:598.2px;top:110.5px;width:16px;height:16px" viewBox="0 0 16 16" ><path d="M3.4 1 H1.2 V9.4 H3.4 M12.6 1 H14.8 V9.4 H12.6" fill="none" stroke="#8a8a8a" stroke-width="1.1" /><path d="M8 2 L12.4 4 V7 L8 9 L3.6 7 V4 Z" fill="#8a8a8a" /><path d="M3.6 4 L8 6 L12.4 4" fill="none" stroke="#ddd" stroke-width="0.7" /><circle cx="5.4" cy="13.6" r="1.5" fill="none" stroke="#8a8a8a" stroke-width="0.9"/><circle cx="10.6" cy="13.6" r="1.5" fill="none" stroke="#8a8a8a" stroke-width="0.9"/><path d="M6.9 13.6 H9.1" fill="none" stroke="#8a8a8a" stroke-width="0.8" /></svg>
<svg class="ic" style="left:620.7px;top:110.5px;width:16px;height:16px" viewBox="0 0 16 16" ><path d="M3.4 1 H1.2 V9.4 H3.4 M12.6 1 H14.8 V9.4 H12.6" fill="none" stroke="#8a8a8a" stroke-width="1.1" /><circle cx="8" cy="5.2" r="3.8" fill="#ccc" stroke="#8a8a8a" stroke-width="1"/><path d="M4.2 5.2 H11.8 M8 1.4 V9 M5 3.2 H11 M5 7.2 H11 M6.2 1.8 V8.6 M9.8 1.8 V8.6" fill="none" stroke="#8a8a8a" stroke-width="0.6" /><circle cx="5.4" cy="13.6" r="1.5" fill="none" stroke="#8a8a8a" stroke-width="0.9"/><circle cx="10.6" cy="13.6" r="1.5" fill="none" stroke="#8a8a8a" stroke-width="0.9"/><path d="M6.9 13.6 H9.1" fill="none" stroke="#8a8a8a" stroke-width="0.8" /></svg>
<svg class="ic" style="left:642px;top:110.5px;width:16px;height:16px" viewBox="0 0 16 16" ><circle cx="4.2" cy="9.6" r="2.9" fill="none" stroke="#777" stroke-width="1.2"/><circle cx="11.8" cy="9.6" r="2.9" fill="none" stroke="#777" stroke-width="1.2"/><path d="M7 9 Q8 8 9 9 M2.4 7.4 L4.6 3.4 M13.6 7.4 L11.4 3.4" fill="none" stroke="#777" stroke-width="1.1" /></svg>
<svg class="ic" style="left:663.7px;top:110.5px;width:16px;height:16px" viewBox="0 0 16 16" ><rect x="2.4" y="1.4" width="12" height="10.4" fill="#fff" stroke="#8a8a8a" stroke-width="1"/><rect x="2" y="1" width="12.8" height="2" fill="#8a8a8a"/><path d="M6.4 3 V11.8 M10.4 3 V11.8 M2.4 6 H14.4 M2.4 9 H14.4" fill="none" stroke="#8a8a8a" stroke-width="0.9" /><rect x="1.5" y="10.5" width="7" height="5.5" fill="#eeeef2"/><circle cx="3.4" cy="13.6" r="1.5" fill="none" stroke="#8a8a8a" stroke-width="0.9"/><circle cx="7" cy="13.6" r="1.5" fill="none" stroke="#8a8a8a" stroke-width="0.9"/></svg>
<div class="b " style="left:685px;top:109px;width:1px;height:20px;background:#d0d0d8"></div>
<svg class="ic" style="left:692px;top:110.5px;width:16px;height:16px" viewBox="0 0 16 16" ><path d="M5.4 2.6 H14.6 M5.4 8 H14.6 M5.4 13.4 H14.6" fill="none" stroke="#333" stroke-width="2" /><path d="M3.6 2.2 H1.6 V13.6 H3.6" fill="none" stroke="#333" stroke-width="1.2" /><path d="M2.6 11.6 L5 13.6 L2.6 15.6 Z" fill="#333" /></svg>
<div class="b " style="left:722.6px;top:110px;width:6px;height:18px;background:repeating-conic-gradient(#cfcfd8 0 25%,transparent 0 50%) 0 0/4px 4px"></div>
<svg class="ic" style="left:738px;top:110.5px;width:16px;height:16px" viewBox="0 0 16 16" ><rect x="5.6" y="1.6" width="9" height="11.6" fill="#fff" stroke="#222" stroke-width="1.1"/><rect x="5" y="1" width="10.2" height="2.4" fill="#111"/><path d="M10.4 3.4 V13.2 M5.6 6.4 H14.6 M5.6 9.4 H14.6" fill="none" stroke="#222" stroke-width="0.9" /><rect x="0.6" y="4.6" width="8" height="10.8" fill="#eeeef2"/><path d="M1.2 6.6000000000000005 C1.2 4.800000000000001 8.0 4.800000000000001 8.0 6.6000000000000005 V13.8 C8.0 15.6 1.2 15.6 1.2 13.8 Z" fill="#2a2a2a" /><path d="M1.5 7.2 C2.2 8.4 7.0 8.4 7.7 7.2" fill="none" stroke="#bbb" stroke-width="0.7" /></svg>
<svg class="ic" style="left:760.5px;top:110.5px;width:16px;height:16px" viewBox="0 0 16 16" ><path d="M6.4 1h2.2v2.2H6.4z M9.8 1h2.2v2.2H9.8z M13.2 1h2.2v2.2h-2.2z M9.8 4.4h2.2v2.2H9.8z M13.2 4.4h2.2v2.2h-2.2z M9.8 7.8h2.2V10H9.8z M13.2 7.8h2.2V10h-2.2z M9.8 11.2h2.2v2.2H9.8z M13.2 11.2h2.2v2.2h-2.2z" fill="#222" /><rect x="0.6" y="3.8" width="8.4" height="11.6" fill="#eeeef2"/><path d="M1.2 5.8 C1.2 3.9999999999999996 8.4 3.9999999999999996 8.4 5.8 V13.8 C8.4 15.6 1.2 15.6 1.2 13.8 Z" fill="#2a2a2a" /><path d="M1.5 6.3999999999999995 C2.2 7.6 7.4 7.6 8.1 6.3999999999999995" fill="none" stroke="#bbb" stroke-width="0.7" /></svg>
<svg class="ic" style="left:782.2px;top:110.5px;width:16px;height:16px" viewBox="0 0 16 16" ><circle cx="10.6" cy="6" r="4.6" fill="#fff" stroke="#333" stroke-width="1.2"/><path d="M6 6 H15.2 M10.6 1.4 V10.6 M7.2 3.4 H14 M7.2 8.6 H14 M10.6 1.4 C8 3.4 8 8.6 10.6 10.6 M10.6 1.4 C13.2 3.4 13.2 8.6 10.6 10.6" fill="none" stroke="#333" stroke-width="0.7" /><circle cx="4.8" cy="7.2" r="2.5" fill="#111" stroke="#111" stroke-width="0.4"/><path d="M0.8 15 V12.6 C0.8 10.4 8.8 10.4 8.8 12.6 V15 Z" fill="#111" /><path d="M3.6 10.6 L4.8 12.8 L6 10.6 Z" fill="#fff" /></svg>
<div class="b " style="left:812.4px;top:110px;width:6px;height:18px;background:repeating-conic-gradient(#cfcfd8 0 25%,transparent 0 50%) 0 0/4px 4px"></div>
<svg class="ic" style="left:324.25px;top:157.5px;width:16px;height:16px" viewBox="0 0 16 16" ><rect x="6" y="4" width="8" height="9" fill="#fff"/><path d="M10 1.6 L14.6 4.2 V11 L10 13.8 L5.6 11 V4.2 Z M5.6 4.2 L10 6.8 L14.6 4.2 M10 6.8 V13.8" fill="none" stroke="#787878" stroke-width="1.15" /><path d="M0 7.4 L3.6 2.8 L7.2 7.4 H5 V11 H2.2 V7.4 Z" fill="#5c5c5c" /><rect x="2" y="12.2" width="3.2" height="1.8" fill="#5c5c5c"/></svg>
<svg class="ic" style="left:346.5px;top:157.5px;width:16px;height:16px" viewBox="0 0 16 16" ><rect x="6" y="4" width="8" height="9" fill="#fff"/><path d="M10 1.6 L14.6 4.2 V11 L10 13.8 L5.6 11 V4.2 Z M5.6 4.2 L10 6.8 L14.6 4.2 M10 6.8 V13.8" fill="none" stroke="#787878" stroke-width="1.15" /><path d="M0 9 L3.6 13.6 L7.2 9 H5 V5.6 H2.2 V9 Z" fill="#5c5c5c" /><rect x="2" y="2.6" width="3.2" height="1.8" fill="#5c5c5c"/></svg>
<svg class="ic" style="left:374.25px;top:157.5px;width:16px;height:16px" viewBox="0 0 16 16" ><path d="M1.4 9.4 L6.2 4.6" fill="none" stroke="#6a6a6a" stroke-width="2.6" /><circle cx="7.6" cy="3.4" r="2.3" fill="none" stroke="#6a6a6a" stroke-width="2.1"/><path d="M7.8 3.2 L11.4 -0.4" fill="none" stroke="#eeeef2" stroke-width="2.2" /><circle cx="11" cy="11.4" r="4" fill="#8c8c8c" stroke="#6e6e6e" stroke-width="0.9"/><path d="M7 11.4 H15 M11 7.4 V15.4 M7.6 9.9 H14.4 M7.6 12.9 H14.4 M9.4 7.7 V15.1 M12.6 7.7 V15.1" fill="none" stroke="#d0d0d0" stroke-width="0.55" /></svg>
<svg class="ic" style="left:396.75px;top:157.5px;width:16px;height:16px" viewBox="0 0 16 16" ><text x="-0.5" y="8" font-family="Liberation Serif,serif" font-style="italic" font-weight="bold" font-size="10" fill="#7a7a7a">fx</text><circle cx="11" cy="11.4" r="4" fill="#8c8c8c" stroke="#6e6e6e" stroke-width="0.9"/><path d="M7 11.4 H15 M11 7.4 V15.4 M7.6 9.9 H14.4 M7.6 12.9 H14.4 M9.4 7.7 V15.1 M12.6 7.7 V15.1" fill="none" stroke="#d0d0d0" stroke-width="0.55" /></svg>
<div class="b " style="left:367.1px;top:156px;width:1px;height:20px;background:#d0d0d8"></div>
<svg class="ic" style="left:1483.7px;top:157.5px;width:16px;height:16px" viewBox="0 0 16 16" ><rect x="3" y="4.5" width="12" height="9" fill="#fff"/><path d="M9 5.6 C8 4.6 5 4.6 3.4 5.2 V13.6 C5 13 8 13 9 14 C10 13 13 13 14.6 13.6 V5.2 C13 4.6 10 4.6 9 5.6 Z" fill="none" stroke="#222" stroke-width="1.1" /><path d="M9 5.6 V14.4" fill="none" stroke="#111" stroke-width="1.6" /><path d="M3.4 0.4 V5.4 M0.9 2.9 H5.9" fill="none" stroke="#1a8a1a" stroke-width="1.7" /></svg>
<svg class="ic" style="left:1506px;top:157.5px;width:16px;height:16px" viewBox="0 0 16 16" ><path d="M1.4 9.399999999999999 C1.4 7.6 7.0 7.6 7.0 9.399999999999999 V13.6 C7.0 15.399999999999999 1.4 15.399999999999999 1.4 13.6 Z" fill="#8a8a8a" /><path d="M1.7 10.0 C2.4 11.2 6.0 11.2 6.7 10.0" fill="none" stroke="#bbb" stroke-width="0.7" /><path d="M5.4 4.4 V2.6 H3.6 M2.4 6.4 V3" fill="none" stroke="#8a8a8a" stroke-width="1.1" /><rect x="7.2" y="1.4" width="2.8" height="2.6" fill="none" stroke="#8a8a8a" stroke-width="1"/><rect x="11.6" y="1.4" width="2.8" height="2.6" fill="none" stroke="#8a8a8a" stroke-width="1"/><path d="M13.4 9.6 V12.6 H10.4 M11.6 11.2 L10.2 12.6 L11.6 14" fill="none" stroke="#8a8a8a" stroke-width="1.1" /></svg>
<svg class="ic" style="left:1527.5px;top:157.5px;width:16px;height:16px" viewBox="0 0 16 16" ><rect x="4" y="1.5" width="11" height="10" fill="#fff"/><path d="M9.5 2.8 C8.5 2 6 2 4.5 2.5 V10.5 M9.5 11 C10.5 10 13 10 14.5 10.5 V2.5 C13 2 10.5 2 9.5 2.8 Z" fill="none" stroke="#8a8a8a" stroke-width="1.1" /><circle cx="4.4" cy="11.2" r="3.7" fill="#aaa" stroke="#777" stroke-width="1"/><path d="M2.7 12.9 V10.2 Q3.5 9.5 4.4 10.3 V12.9 M4.4 10.3 Q5.3 9.5 6.1 10.3 V12.9" fill="none" stroke="#fff" stroke-width="0.8" /></svg>
<svg class="ic" style="left:1555.6px;top:157.5px;width:16px;height:16px" viewBox="0 0 16 16" ><rect x="1" y="2.5" width="14" height="11" fill="#fff"/><path d="M8 4 C6.8 3 3.4 3 1.6 3.6 V13 C3.4 12.4 6.8 12.4 8 13.6 C9.2 12.4 12.6 12.4 14.4 13 V3.6 C12.6 3 9.2 3 8 4 Z" fill="none" stroke="#8a8a8a" stroke-width="1.1" /><path d="M8 4 V13.6" fill="none" stroke="#777" stroke-width="1.3" /><path d="M1.6 1.4 H6" fill="none" stroke="#8a8a8a" stroke-width="1" /></svg>
<svg class="ic" style="left:1577.5px;top:157.5px;width:16px;height:16px" viewBox="0 0 16 16" ><path d="M0.6 0.4 L4.4 4.2 M4.4 0.4 L0.6 4.2" fill="none" stroke="#d02020" stroke-width="1.3" /><rect x="6.4" y="1.8" width="5" height="3" fill="#fff" stroke="#222" stroke-width="1.2"/><rect x="1.6" y="10.8" width="5" height="3.4" fill="#fff" stroke="#222" stroke-width="1.2"/><rect x="9.4" y="10.8" width="5" height="3.4" fill="#fff" stroke="#222" stroke-width="1.2"/><path d="M8.8 4.8 V8 M4 10.8 V8 H12 V10.8" fill="none" stroke="#222" stroke-width="1.2" /></svg>
<svg class="ic" style="left:1605.9px;top:157.5px;width:16px;height:16px" viewBox="0 0 16 16" ><path d="M0.6 3.4 H4.6 M2.6 1.4 V5.4" fill="none" stroke="#8a8a8a" stroke-width="1.1" /><rect x="6.4" y="1.6" width="8" height="3.6" fill="#fff" stroke="#8a8a8a" stroke-width="1.1"/><rect x="3.4" y="10" width="7" height="3.8" fill="#fff" stroke="#8a8a8a" stroke-width="1.1"/><path d="M12.4 5.2 V8 H10.4 M7 10 V8 H12" fill="none" stroke="#8a8a8a" stroke-width="1" /><rect x="6.4" y="1.2" width="8" height="1.4" fill="#8a8a8a"/></svg>
<svg class="ic" style="left:1628.3px;top:157.5px;width:16px;height:16px" viewBox="0 0 16 16" ><path d="M0.6 3.4 H4.6" fill="none" stroke="#8a8a8a" stroke-width="1.1" /><rect x="6.4" y="1.6" width="8" height="3.6" fill="#fff" stroke="#8a8a8a" stroke-width="1.1"/><rect x="3.4" y="10" width="7" height="3.8" fill="#fff" stroke="#8a8a8a" stroke-width="1.1"/><path d="M12.4 5.2 V8 H10.4 M7 10 V8 H12" fill="none" stroke="#8a8a8a" stroke-width="1" /><rect x="6.4" y="1.2" width="8" height="1.4" fill="#8a8a8a"/></svg>
<div class="b " style="left:1549px;top:156px;width:1px;height:20px;background:#d0d0d8"></div>
<div class="b " style="left:1599px;top:156px;width:1px;height:20px;background:#d0d0d8"></div>
<svg class="ic" style="left:545.7px;top:856.3px;width:14px;height:14px" viewBox="0 0 16 16" ><circle cx="10.4" cy="8.4" r="3.4" fill="#fff" stroke="#222" stroke-width="1.4"/><path d="M8.0 10.8 L3.6 15" fill="none" stroke="#222" stroke-width="2" /><path d="M0.4 3.6 L3.8 0.6 V2.6 H7.2 V4.6 H3.8 V6.6 Z" fill="#0a4a9e" /></svg>
<svg class="ic" style="left:567.7px;top:856.3px;width:14px;height:14px" viewBox="0 0 16 16" ><circle cx="10.4" cy="8.4" r="3.4" fill="#fff" stroke="#222" stroke-width="1.4"/><path d="M8.0 10.8 L3.6 15" fill="none" stroke="#222" stroke-width="2" /><path d="M7.4 3.6 L4 0.6 V2.6 H0.6 V4.6 H4 V6.6 Z" fill="#0a4a9e" /></svg>
<svg class="ic" style="left:595px;top:856.3px;width:14px;height:14px" viewBox="0 0 16 16" ><path d="M6 4 V1.4 H10.4 L13 4 V10.6 H10" fill="none" stroke="#222" stroke-width="1.2" /><path d="M10.2 1.6 V4.2 H12.8" fill="none" stroke="#222" stroke-width="0.9" /><rect x="2.6" y="4.6" width="6.8" height="9.8" fill="#fff" stroke="#222" stroke-width="1.2"/><path d="M6.4 7.4 H8 M6.4 9.6 H8" fill="none" stroke="#222" stroke-width="0.8" /></svg>
<svg class="ic" style="left:616.3px;top:856.3px;width:14px;height:14px" viewBox="0 0 16 16" ><path d="M2.5 2 C6 5 10 10 13.5 14" fill="none" stroke="#a01414" stroke-width="2.2" /><path d="M13 1.5 C10 5 5.5 10 2 14.2" fill="none" stroke="#a01414" stroke-width="2.4" /></svg>
<svg class="ic" style="left:643.7px;top:855.3px;width:16px;height:16px" viewBox="0 0 16 16" ><path d="M3.4 3.6 V1.6 H12 V9.6" fill="none" stroke="#777" stroke-width="1" /><path d="M5.4 5.6 V3.6 H14 V11.6 H12" fill="none" stroke="#777" stroke-width="1" /><rect x="5.4" y="5.6" width="8.6" height="8.4" fill="#fff" stroke="#555" stroke-width="1.1"/><path d="M7.4 9.8 H12 M9.7 7.5 V12.1" fill="none" stroke="#1858b0" stroke-width="1.3" /></svg>
<svg class="ic" style="left:665.3px;top:855.3px;width:16px;height:16px" viewBox="0 0 16 16" ><path d="M3.4 3.6 V1.6 H12 V9.6" fill="none" stroke="#777" stroke-width="1" /><path d="M5.4 5.6 V3.6 H14 V11.6 H12" fill="none" stroke="#777" stroke-width="1" /><rect x="5.4" y="5.6" width="8.6" height="8.4" fill="#fff" stroke="#555" stroke-width="1.1"/><path d="M7.4 9.8 H12" fill="none" stroke="#1858b0" stroke-width="1.3" /></svg>
<div class="b " style="left:587.5px;top:854px;width:1px;height:19px;background:#d0d0d8"></div>
<div class="b " style="left:637.2px;top:854px;width:1px;height:19px;background:#d0d0d8"></div>
<div class="b " style="left:108px;top:31px;width:15px;height:15px;background:#e03a14;border-radius:1.5px 1.5px 1.5px 5px"></div>
<div class="t " style="left:109px;top:32.75px;height:12px;line-height:12px;color:#fff;font-weight:bold;font-size:9px;letter-spacing:-0.6px;width:13px;text-align:center;">DF</div>
<div class="b " style="left:1547.5px;top:38.5px;width:10.5px;height:1px;background:#222"></div>
<div class="b " style="left:1592.5px;top:33.5px;width:10.5px;height:10.5px;border:1px solid #222"></div>
<svg class="ic" style="left:1636.5px;top:31px;width:15px;height:15px" viewBox="0 0 16 16" ><path d="M2.5 2.5 L13.5 13.5 M13.5 2.5 L2.5 13.5" fill="none" stroke="#222" stroke-width="1.1" /></svg>
<svg class="ic" style="left:1418.1px;top:1020.1px;width:17px;height:17px" viewBox="0 0 16 16" ><circle cx="8" cy="8" r="6.8" fill="#fff" stroke="#e02020" stroke-width="1.4"/><rect x="7" y="3.6" width="2" height="5.6" fill="#e02020"/><rect x="7" y="10.4" width="2" height="2" fill="#e02020"/></svg>
<svg class="ic" style="left:1486.3px;top:1020.1px;width:17px;height:17px" viewBox="0 0 16 16" ><circle cx="8" cy="8" r="6.4" fill="#555" stroke="#ddd" stroke-width="1.6"/><path d="M3.8 3.8 L12.2 12.2" fill="none" stroke="#ddd" stroke-width="1.8" /></svg>
<div class="b " style="left:1655px;top:1030px;width:9px;height:7px;background:repeating-conic-gradient(#5aa0e0 0 25%,transparent 0 50%) 0 0/3px 3px;opacity:.7"></div>
<svg class="ic" style="left:1697.5px;top:407px;width:14px;height:14px" viewBox="0 0 16 16" ><path d="M2.5 2.5 L13.5 13.5 M13.5 2.5 L2.5 13.5" fill="none" stroke="#777" stroke-width="1.1" /></svg>
<svg class="ic" style="left:1688.5px;top:436px;width:10px;height:10px" viewBox="0 0 16 16" ><path d="M3 5.5 L8 10.5 L13 5.5" fill="none" stroke="#777" stroke-width="1.5" /></svg>
<svg class="ic" style="left:1707.5px;top:433px;width:16px;height:16px" viewBox="0 0 16 16" ><circle cx="8" cy="8" r="7.3" fill="#3a6cbe" stroke="#2b5fb0" stroke-width="0.6"/><text x="8" y="13" text-anchor="middle" font-family="Liberation Sans,sans-serif" font-weight="bold" font-size="13.5" fill="#fff">?</text></svg>
<svg class="ic" style="left:1682px;top:1012px;width:16px;height:16px" viewBox="0 0 16 16" ><rect x="1.5" y="1.5" width="13" height="13" fill="#fff" stroke="#7ab0d8" stroke-width="0.8"/><path d="M3 4.5 H5 M3 8 H5 M3 11.5 H5" fill="none" stroke="#888" stroke-width="1.4" /><path d="M6.6 4.5 H9.6 M10.6 4.5 H13 M6.6 8 H9.6 M10.6 8 H13 M6.6 11.5 H9.6 M10.6 11.5 H13" fill="none" stroke="#aaa" stroke-width="1" /></svg>
<svg class="ic" style="left:1705px;top:1013px;width:14px;height:14px" viewBox="0 0 16 16" ><rect x="1.5" y="3" width="13" height="10" fill="#fff" stroke="#777" stroke-width="1"/><rect x="3" y="4.6" width="10" height="3" fill="#3a78c0"/><path d="M3 11.4 L6 8 L9 10.4 L11 9 L13 11.4 Z" fill="#5a8a50" /></svg>
<div class="b " style="left:100px;top:132.5px;width:215px;height:19.6px;background:#b9c7db;box-shadow:inset 0 0 0 1px rgba(120,135,165,.35)"></div>
<div class="t " style="left:103.7px;top:135.05px;height:16px;line-height:16px;color:#111;letter-spacing:-0.25px;">Workspace Explorer</div>
<div class="b " style="left:319.5px;top:132.5px;width:216px;height:19.6px;background:#b9c7db;box-shadow:inset 0 0 0 1px rgba(120,135,165,.35)"></div>
<div class="t " style="left:323.2px;top:135.05px;height:16px;line-height:16px;color:#111;letter-spacing:-0.27px;">Code Explorer [FeedbackSelect....</div>
<div class="b " style="left:1479.3px;top:132.5px;width:187.7px;height:19.6px;background:#b9c7db;box-shadow:inset 0 0 0 1px rgba(120,135,165,.35)"></div>
<div class="t " style="left:1483px;top:135.05px;height:16px;line-height:16px;color:#111;letter-spacing:-0.38px;">DDO Explorer [FeedbackSe...</div>
<div class="b " style="left:540px;top:831px;width:934.5px;height:19.2px;background:#b9c7db;box-shadow:inset 0 0 0 1px rgba(120,135,165,.35)"></div>
<div class="t " style="left:543.7px;top:833.35px;height:16px;line-height:16px;color:#111;letter-spacing:0.19px;">Output</div>
<div class="b " style="left:100px;top:185px;width:215px;height:831px;background:#fff;border:1px solid #8e8e96"></div>
<div class="b " style="left:319.5px;top:183px;width:216px;height:808px;background:#fff;border:1px solid #8e8e96"></div>
<div class="b " style="left:1479px;top:183px;width:186px;height:808px;background:#fff;border:1px solid #8e8e96"></div>
<div class="b " style="left:540px;top:877px;width:935px;height:114px;background:#fff;border:1px solid #8e8e96"></div>
<div class="t " style="left:104.75px;top:160.75px;height:16px;line-height:16px;letter-spacing:-0.12px;">Current Project:</div>
<div class="b " style="left:194.5px;top:157px;width:120px;height:23px;background:#e3e3e3;border:1px solid #b4b4b4"></div>
<div class="t " style="left:198.5px;top:160.75px;height:16px;line-height:16px;letter-spacing:-0.15px;">WebApp.src</div>
<svg class="ic" style="left:298.5px;top:163.5px;width:11px;height:11px" viewBox="0 0 16 16" ><path d="M3 5.5 L8 10.5 L13 5.5" fill="none" stroke="#333" stroke-width="1.5" /></svg>
<div class="b " style="left:128px;top:204px;width:1px;height:118px;background:#b6b6b6"></div>
<div class="b " style="left:143px;top:222px;width:1px;height:28px;background:#b6b6b6"></div>
<div class="b " style="left:128px;top:268px;width:8px;height:1px;background:#b6b6b6"></div>
<div class="b " style="left:128px;top:286px;width:8px;height:1px;background:#b6b6b6"></div>
<div class="b " style="left:128px;top:304px;width:8px;height:1px;background:#b6b6b6"></div>
<div class="b " style="left:128px;top:322px;width:8px;height:1px;background:#b6b6b6"></div>
<div class="b " style="left:143px;top:232px;width:9px;height:1px;background:#b6b6b6"></div>
<div class="b " style="left:143px;top:250px;width:9px;height:1px;background:#b6b6b6"></div>
<div class="b " style="left:169.5px;top:223.5px;width:107px;height:17.5px;background:#e9e9e9"></div>
<div class="b " style="left:108.4px;top:192.5px;width:9px;height:9px;background:#fff;border:1px solid #9a9a9a"></div>
<div class="b " style="left:110.4px;top:196.5px;width:5px;height:1px;background:#3c4fa0"></div>
<svg class="ic" style="left:120.25px;top:188.5px;width:16px;height:16px" viewBox="0 0 16 16" ><rect x="2.5" y="1" width="12" height="10.5" fill="#fff"/><rect x="3" y="1.5" width="11" height="10" fill="none" stroke="#222" stroke-width="1.1"/><rect x="2.5" y="1" width="12" height="2.6" fill="#111"/><circle cx="4.6" cy="11.2" r="3.9" fill="#2e2e2e" stroke="#111" stroke-width="1"/><path d="M0.6999999999999997 11.2 H8.5 M4.6 7.299999999999999 V15.1 M1.4999999999999998 9.6 H7.7 M1.4999999999999998 12.799999999999999 H7.7 M2.8999999999999995 7.599999999999999 V14.799999999999999 M6.3 7.599999999999999 V14.799999999999999" fill="none" stroke="#a0a0a0" stroke-width="0.35" /></svg>
<div class="t " style="left:141.6px;top:188.75px;height:16px;line-height:16px;letter-spacing:-0.15px;">WebApp.src</div>
<div class="b " style="left:123.4px;top:210.25px;width:9px;height:9px;background:#fff;border:1px solid #9a9a9a"></div>
<div class="b " style="left:125.4px;top:214.25px;width:5px;height:1px;background:#3c4fa0"></div>
<svg class="ic" style="left:135.35px;top:206.25px;width:16px;height:16px" viewBox="0 0 16 16" ><rect x="2.5" y="1" width="12" height="10.5" fill="#fff"/><rect x="3" y="1.5" width="11" height="10" fill="none" stroke="#222" stroke-width="1.1"/><rect x="2.5" y="1" width="12" height="2.6" fill="#111"/><path d="M8 6 H12 M8 8.5 H12" fill="none" stroke="#222" stroke-width="1.2" /><circle cx="4.6" cy="11.2" r="3.9" fill="#2e2e2e" stroke="#111" stroke-width="1"/><path d="M0.6999999999999997 11.2 H8.5 M4.6 7.299999999999999 V15.1 M1.4999999999999998 9.6 H7.7 M1.4999999999999998 12.799999999999999 H7.7 M2.8999999999999995 7.599999999999999 V14.799999999999999 M6.3 7.599999999999999 V14.799999999999999" fill="none" stroke="#a0a0a0" stroke-width="0.35" /></svg>
<div class="t " style="left:156.6px;top:206.5px;height:16px;line-height:16px;letter-spacing:-0.35px;">Web Views (2)</div>
<svg class="ic" style="left:150.45px;top:224.25px;width:16px;height:16px" viewBox="0 0 16 16" ><rect x="4" y="1.5" width="9" height="13" fill="#fff"/><path d="M4.5 1.5 H9.5 L12.5 4.5 V14.5 H4.5 Z" fill="none" stroke="#1a1a1a" stroke-width="1.3" /><path d="M8.6 1.2 L12.8 5.4 H8.6 Z" fill="#111" /><path d="M5.8 6.6 H11.2 M5.8 8.6 H11.2 M5.8 10.6 H11.2 M5.8 12.6 H11.2" fill="none" stroke="#444" stroke-width="1.05" /></svg>
<div class="t " style="left:171.6px;top:224.5px;height:16px;line-height:16px;letter-spacing:-0.31px;">FeedbackCreate.wo</div>
<svg class="ic" style="left:150.45px;top:242.4px;width:16px;height:16px" viewBox="0 0 16 16" ><rect x="4" y="1.5" width="9" height="13" fill="#fff"/><path d="M4.5 1.5 H9.5 L12.5 4.5 V14.5 H4.5 Z" fill="none" stroke="#1a1a1a" stroke-width="1.3" /><path d="M8.6 1.2 L12.8 5.4 H8.6 Z" fill="#111" /><path d="M5.8 6.6 H11.2 M5.8 8.6 H11.2 M5.8 10.6 H11.2 M5.8 12.6 H11.2" fill="none" stroke="#444" stroke-width="1.05" /></svg>
<div class="t " style="left:171.6px;top:242.65px;height:16px;line-height:16px;letter-spacing:-0.33px;">FeedbackSelect.wo</div>
<div class="b " style="left:123.4px;top:264.25px;width:9px;height:9px;background:#fff;border:1px solid #9a9a9a"></div>
<div class="b " style="left:125.4px;top:268.25px;width:5px;height:1px;background:#3c4fa0"></div>
<div class="b " style="left:127.4px;top:266.25px;width:1px;height:5px;background:#3c4fa0"></div>
<svg class="ic" style="left:135.35px;top:260.25px;width:16px;height:16px" viewBox="0 0 16 16" ><rect x="1.5" y="0" width="13.5" height="2.4" fill="#111"/><rect x="3" y="3.5" width="11.5" height="8" fill="#fff"/><rect x="3.5" y="4" width="10.5" height="7.5" fill="none" stroke="#222" stroke-width="1"/><rect x="3" y="3.5" width="11.5" height="2" fill="#111"/><path d="M9 7.5 H12.5 M9 9.5 H12.5" fill="none" stroke="#222" stroke-width="1.1" /><circle cx="4.6" cy="11.4" r="3.9" fill="#2e2e2e" stroke="#111" stroke-width="1"/><path d="M0.6999999999999997 11.4 H8.5 M4.6 7.5 V15.3 M1.4999999999999998 9.8 H7.7 M1.4999999999999998 13.0 H7.7 M2.8999999999999995 7.8 V15.0 M6.3 7.8 V15.0" fill="none" stroke="#a0a0a0" stroke-width="0.35" /></svg>
<div class="t " style="left:156.6px;top:260.5px;height:16px;line-height:16px;letter-spacing:-0.12px;">Web Modal Dialogs (1)</div>
<div class="b " style="left:123.4px;top:282.25px;width:9px;height:9px;background:#fff;border:1px solid #9a9a9a"></div>
<div class="b " style="left:125.4px;top:286.25px;width:5px;height:1px;background:#3c4fa0"></div>
<div class="b " style="left:127.4px;top:284.25px;width:1px;height:5px;background:#3c4fa0"></div>
<svg class="ic" style="left:135.35px;top:278.25px;width:16px;height:16px" viewBox="0 0 16 16" ><circle cx="11.3" cy="4.6" r="3.1" fill="#fff" stroke="#222" stroke-width="1.2"/><path d="M11.3 2.5 V6.7 M9.2 4.6 H13.4" fill="none" stroke="#222" stroke-width="1" /><circle cx="7.8" cy="7.3" r="2.6" fill="#333" stroke="#222" stroke-width="1"/><circle cx="4.8" cy="11.2" r="3.9" fill="#2e2e2e" stroke="#111" stroke-width="1"/><path d="M0.8999999999999999 11.2 H8.7 M4.8 7.299999999999999 V15.1 M1.7 9.6 H7.8999999999999995 M1.7 12.799999999999999 H7.8999999999999995 M3.0999999999999996 7.599999999999999 V14.799999999999999 M6.5 7.599999999999999 V14.799999999999999" fill="none" stroke="#a0a0a0" stroke-width="0.35" /></svg>
<div class="t " style="left:156.6px;top:278.5px;height:16px;line-height:16px;letter-spacing:-0.08px;">Web Components (2)</div>
<div class="b " style="left:123.4px;top:300.1px;width:9px;height:9px;background:#fff;border:1px solid #9a9a9a"></div>
<div class="b " style="left:125.4px;top:304.1px;width:5px;height:1px;background:#3c4fa0"></div>
<div class="b " style="left:127.4px;top:302.1px;width:1px;height:5px;background:#3c4fa0"></div>
<svg class="ic" style="left:135.35px;top:296.1px;width:16px;height:16px" viewBox="0 0 16 16" ><rect x="1" y="2.5" width="14" height="10" fill="#fff"/><path d="M8 3.5 C6 2.2 3 2.2 1.5 3 V12.5 C3 11.8 6 11.8 8 13 C10 11.8 13 11.8 14.5 12.5 V3 C13 2.2 10 2.2 8 3.5 Z" fill="none" stroke="#222" stroke-width="1.2" /><path d="M8 3.5 V14" fill="none" stroke="#111" stroke-width="1.8" /></svg>
<div class="t " style="left:156.6px;top:296.35px;height:16px;line-height:16px;letter-spacing:-0.20px;">Data Dictionaries (1)</div>
<div class="b " style="left:123.4px;top:318.25px;width:9px;height:9px;background:#fff;border:1px solid #9a9a9a"></div>
<div class="b " style="left:125.4px;top:322.25px;width:5px;height:1px;background:#3c4fa0"></div>
<div class="b " style="left:127.4px;top:320.25px;width:1px;height:5px;background:#3c4fa0"></div>
<svg class="ic" style="left:135.35px;top:314.25px;width:16px;height:16px" viewBox="0 0 16 16" ><rect x="7.5" y="1.5" width="6.5" height="9" fill="#bbb"/><path d="M7.5 1.5 H12 L14 3.5 V10.5 H7.5 Z" fill="none" stroke="#222" stroke-width="1" /><rect x="5" y="3.5" width="6.5" height="9" fill="#ccc"/><path d="M5 3.5 H9.5 L11.5 5.5 V12.5 H5 Z" fill="none" stroke="#222" stroke-width="1" /><rect x="2.5" y="5.5" width="6.5" height="9" fill="#ddd"/><path d="M2.5 5.5 H7 L9 7.5 V14.5 H2.5 Z" fill="none" stroke="#222" stroke-width="1" /><path d="M4 9.5 H7.5 M4 11.5 H7.5" fill="none" stroke="#555" stroke-width="0.8" /></svg>
<div class="t " style="left:156.6px;top:314.5px;height:16px;line-height:16px;letter-spacing:-0.33px;">Other Files (10)</div>
<div class="b " style="left:333px;top:193px;width:1px;height:108px;background:#b6b6b6"></div>
<div class="b " style="left:359px;top:238.6px;width:137px;height:17.2px;background:#e9e9e9"></div>
<div class="b " style="left:333px;top:193.6px;width:7px;height:1px;background:#b6b6b6"></div>
<svg class="ic" style="left:340.25px;top:185.6px;width:16px;height:16px" viewBox="0 0 16 16" ><rect x="4" y="1.5" width="9" height="13" fill="#fff"/><path d="M4.5 1.5 H9.5 L12.5 4.5 V14.5 H4.5 Z" fill="none" stroke="#1a1a1a" stroke-width="1.3" /><path d="M8.6 1.2 L12.8 5.4 H8.6 Z" fill="#111" /><path d="M5.8 6.6 H11.2 M5.8 8.6 H11.2 M5.8 10.6 H11.2 M5.8 12.6 H11.2" fill="none" stroke="#444" stroke-width="1.05" /></svg>
<div class="t " style="left:361.6px;top:185.85px;height:16px;line-height:16px;letter-spacing:-0.07px;">cWebView.pkg</div>
<div class="b " style="left:333px;top:211.5px;width:7px;height:1px;background:#b6b6b6"></div>
<svg class="ic" style="left:340.25px;top:203.5px;width:16px;height:16px" viewBox="0 0 16 16" ><rect x="4" y="1.5" width="9" height="13" fill="#fff"/><path d="M4.5 1.5 H9.5 L12.5 4.5 V14.5 H4.5 Z" fill="none" stroke="#1a1a1a" stroke-width="1.3" /><path d="M8.6 1.2 L12.8 5.4 H8.6 Z" fill="#111" /><path d="M5.8 6.6 H11.2 M5.8 8.6 H11.2 M5.8 10.6 H11.2 M5.8 12.6 H11.2" fill="none" stroke="#444" stroke-width="1.05" /></svg>
<div class="t " style="left:361.6px;top:203.75px;height:16px;line-height:16px;letter-spacing:-0.18px;">cWebPanel.pkg</div>
<div class="b " style="left:333px;top:229.5px;width:7px;height:1px;background:#b6b6b6"></div>
<svg class="ic" style="left:340.25px;top:221.5px;width:16px;height:16px" viewBox="0 0 16 16" ><rect x="4" y="1.5" width="9" height="13" fill="#fff"/><path d="M4.5 1.5 H9.5 L12.5 4.5 V14.5 H4.5 Z" fill="none" stroke="#1a1a1a" stroke-width="1.3" /><path d="M8.6 1.2 L12.8 5.4 H8.6 Z" fill="#111" /><path d="M5.8 6.6 H11.2 M5.8 8.6 H11.2 M5.8 10.6 H11.2 M5.8 12.6 H11.2" fill="none" stroke="#444" stroke-width="1.05" /></svg>
<div class="t " style="left:361.6px;top:221.75px;height:16px;line-height:16px;letter-spacing:-0.07px;">cWebForm.pkg</div>
<div class="b " style="left:333px;top:247.4px;width:7px;height:1px;background:#b6b6b6"></div>
<svg class="ic" style="left:340.25px;top:239.4px;width:16px;height:16px" viewBox="0 0 16 16" ><rect x="4" y="1.5" width="9" height="13" fill="#fff"/><path d="M4.5 1.5 H9.5 L12.5 4.5 V14.5 H4.5 Z" fill="none" stroke="#1a1a1a" stroke-width="1.3" /><path d="M8.6 1.2 L12.8 5.4 H8.6 Z" fill="#111" /><path d="M5.8 6.6 H11.2 M5.8 8.6 H11.2 M5.8 10.6 H11.2 M5.8 12.6 H11.2" fill="none" stroke="#444" stroke-width="1.05" /></svg>
<div class="t " style="left:361.6px;top:239.65px;height:16px;line-height:16px;letter-spacing:-0.12px;">cWebRichTextViewer.pkg</div>
<div class="b " style="left:333px;top:265.4px;width:7px;height:1px;background:#b6b6b6"></div>
<svg class="ic" style="left:340.25px;top:257.4px;width:16px;height:16px" viewBox="0 0 16 16" ><rect x="4" y="1.5" width="9" height="13" fill="#fff"/><path d="M4.5 1.5 H9.5 L12.5 4.5 V14.5 H4.5 Z" fill="none" stroke="#1a1a1a" stroke-width="1.3" /><path d="M8.6 1.2 L12.8 5.4 H8.6 Z" fill="#111" /><path d="M5.8 6.6 H11.2 M5.8 8.6 H11.2 M5.8 10.6 H11.2 M5.8 12.6 H11.2" fill="none" stroke="#444" stroke-width="1.05" /></svg>
<div class="t " style="left:361.6px;top:257.65px;height:16px;line-height:16px;letter-spacing:-0.13px;">cWebList.pkg</div>
<div class="b " style="left:333px;top:283.4px;width:7px;height:1px;background:#b6b6b6"></div>
<svg class="ic" style="left:340.25px;top:275.4px;width:16px;height:16px" viewBox="0 0 16 16" ><rect x="4" y="1.5" width="9" height="13" fill="#fff"/><path d="M4.5 1.5 H9.5 L12.5 4.5 V14.5 H4.5 Z" fill="none" stroke="#1a1a1a" stroke-width="1.3" /><path d="M8.6 1.2 L12.8 5.4 H8.6 Z" fill="#111" /><path d="M5.8 6.6 H11.2 M5.8 8.6 H11.2 M5.8 10.6 H11.2 M5.8 12.6 H11.2" fill="none" stroke="#444" stroke-width="1.05" /></svg>
<div class="t " style="left:361.6px;top:275.65px;height:16px;line-height:16px;letter-spacing:-0.21px;">cUserFeedbackDataDictionary.dc</div>
<div class="b " style="left:328.4px;top:297px;width:9px;height:9px;background:#fff;border:1px solid #9a9a9a"></div>
<div class="b " style="left:330.4px;top:301px;width:5px;height:1px;background:#3c4fa0"></div>
<div class="b " style="left:332.4px;top:299px;width:1px;height:5px;background:#3c4fa0"></div>
<svg class="ic" style="left:340.25px;top:293.3px;width:16px;height:16px" viewBox="0 0 16 16" ><rect x="3" y="3" width="10" height="11" fill="#fff"/><path d="M8 1.5 L13.5 4.5 V11.5 L8 14.5 L2.5 11.5 V4.5 Z M2.5 4.5 L8 7.5 L13.5 4.5 M8 7.5 V14.5" fill="none" stroke="#333" stroke-width="1.2" /></svg>
<div class="t " style="left:361.6px;top:293.55px;height:16px;line-height:16px;letter-spacing:-0.35px;">oFeedbackSelect</div>
<div class="b " style="left:320.5px;top:973px;width:214px;height:17px;background:#f0f0f0"></div>
<div class="b " style="left:338.3px;top:974px;width:175px;height:15px;background:#c9c9c9"></div>
<svg class="ic" style="left:323.5px;top:975.5px;width:12px;height:12px" viewBox="0 0 16 16" ><path d="M10 3 L5.5 8 L10 13" fill="none" stroke="#333" stroke-width="2.3" /></svg>
<svg class="ic" style="left:519.5px;top:975.5px;width:12px;height:12px" viewBox="0 0 16 16" ><path d="M6 3 L10.5 8 L6 13" fill="none" stroke="#333" stroke-width="2.3" /></svg>
<svg class="ic" style="left:325.3px;top:996px;width:16px;height:16px" viewBox="0 0 16 16" ><rect x="3" y="1" width="11" height="2.2" fill="#333"/><rect x="3.5" y="1.5" width="10" height="8" fill="#ddd" stroke="#333" stroke-width="1"/><rect x="1.5" y="6.5" width="8" height="7.5" fill="#fff" stroke="#333" stroke-width="1"/><path d="M1.5 9 H9.5 M1.5 11.5 H9.5 M4.2 6.5 V14 M6.9 6.5 V14" fill="none" stroke="#333" stroke-width="0.8" /><circle cx="11.3" cy="10.2" r="2.5" fill="#fff" stroke="#333" stroke-width="1.2"/><path d="M13 12 L15 14.5" fill="none" stroke="#333" stroke-width="1.6" /></svg>
<div class="t " style="left:346px;top:996.85px;height:16px;line-height:16px;letter-spacing:-0.34px;">Table Explorer</div>
<div class="b " style="left:421.7px;top:993px;width:108.3px;height:23px;background:#fff"></div>
<svg class="ic" style="left:425.3px;top:996px;width:16px;height:16px" viewBox="0 0 16 16" ><rect x="2" y="2" width="12.5" height="12.5" fill="#fff" stroke="#222" stroke-width="1.2"/><rect x="1.5" y="1.5" width="13.5" height="2.6" fill="#111"/><path d="M4.5 6 h3v2.4h-3z M7.5 9 h3v2.4h-3z M10 11.6h2.6v2h-2.6z" fill="#e09a30" /><path d="M6 8.4 V10.2 H7.5 M9 11.4 V12.6 H10" fill="none" stroke="#c07818" stroke-width="0.8" /></svg>
<div class="t " style="left:445px;top:996.85px;height:16px;line-height:16px;letter-spacing:-0.25px;">Code Explorer...</div>
<div class="b " style="left:1492.5px;top:198px;width:1px;height:31px;background:#b6b6b6"></div>
<div class="b " style="left:1497px;top:193.6px;width:4px;height:1px;background:#b6b6b6"></div>
<div class="b " style="left:1497px;top:229.3px;width:4px;height:1px;background:#b6b6b6"></div>
<div class="b " style="left:1508px;top:201px;width:1px;height:11px;background:#b6b6b6"></div>
<div class="b " style="left:1508px;top:211.6px;width:7px;height:1px;background:#b6b6b6"></div>
<div class="b " style="left:1488px;top:189.5px;width:9px;height:9px;background:#fff;border:1px solid #9a9a9a"></div>
<div class="b " style="left:1490px;top:193.5px;width:5px;height:1px;background:#3c4fa0"></div>
<div class="b " style="left:1488px;top:225.3px;width:9px;height:9px;background:#fff;border:1px solid #9a9a9a"></div>
<div class="b " style="left:1490px;top:229.3px;width:5px;height:1px;background:#3c4fa0"></div>
<div class="b " style="left:1492px;top:227.3px;width:1px;height:5px;background:#3c4fa0"></div>
<svg class="ic" style="left:1500px;top:185.3px;width:16px;height:16px" viewBox="0 0 16 16" ><rect x="5.5" y="1.5" width="5" height="3.4" fill="#fff" stroke="#222" stroke-width="1.2"/><rect x="1.5" y="10.5" width="5" height="3.4" fill="#fff" stroke="#222" stroke-width="1.2"/><rect x="9.5" y="10.5" width="5" height="3.4" fill="#fff" stroke="#222" stroke-width="1.2"/><path d="M8 5 V7.8 M4 10.5 V7.8 H12 V10.5" fill="none" stroke="#222" stroke-width="1.2" /></svg>
<svg class="ic" style="left:1500px;top:221px;width:16px;height:16px" viewBox="0 0 16 16" ><rect x="5.5" y="1.5" width="5" height="3.4" fill="#fff" stroke="#222" stroke-width="1.2"/><rect x="1.5" y="10.5" width="5" height="3.4" fill="#fff" stroke="#222" stroke-width="1.2"/><rect x="9.5" y="10.5" width="5" height="3.4" fill="#fff" stroke="#222" stroke-width="1.2"/><path d="M8 5 V7.8 M4 10.5 V7.8 H12 V10.5" fill="none" stroke="#222" stroke-width="1.2" /></svg>
<svg class="ic" style="left:1514.5px;top:203.6px;width:16px;height:16px" viewBox="0 0 16 16" ><rect x="4" y="1.5" width="11" height="10" fill="#fff"/><path d="M9.5 2.8 C8.5 2 6 2 4.5 2.5 V10.5 C6 10 8.5 10 9.5 11 C10.5 10 13 10 14.5 10.5 V2.5 C13 2 10.5 2 9.5 2.8 Z" fill="none" stroke="#222" stroke-width="1.1" /><path d="M9.5 3 V11" fill="none" stroke="#222" stroke-width="1" /><circle cx="4.5" cy="11.3" r="3.6" fill="#333" stroke="#111" stroke-width="1"/><path d="M2.8 13 V10.3 Q3.6 9.6 4.5 10.4 V13 M4.5 10.4 Q5.4 9.6 6.2 10.4 V13" fill="none" stroke="#fff" stroke-width="0.8" /></svg>
<div class="b " style="left:1480px;top:184px;width:184px;height:60px;overflow:hidden"><div class="t " style="left:41.4px;top:1.85px;height:16px;line-height:16px;font-weight:bold;color:#000;letter-spacing:-0.11px;">DDOs for oFeedbackSelect</div><div class="t " style="left:56px;top:19.85px;height:16px;line-height:16px;letter-spacing:-0.26px;">cUserFeedbackDataDictionary</div><div class="t " style="left:41.4px;top:37.55px;height:16px;line-height:16px;font-weight:bold;color:#000;letter-spacing:-0.21px;">DDO Column Selector</div></div>
<div class="b " style="left:1480px;top:974px;width:184px;height:16px;background:#f0f0f0"></div>
<div class="b " style="left:1498px;top:975px;width:95px;height:14px;background:#c9c9c9"></div>
<svg class="ic" style="left:1482.5px;top:976px;width:12px;height:12px" viewBox="0 0 16 16" ><path d="M10 3 L5.5 8 L10 13" fill="none" stroke="#333" stroke-width="2.3" /></svg>
<svg class="ic" style="left:1649.5px;top:976px;width:12px;height:12px" viewBox="0 0 16 16" ><path d="M6 3 L10.5 8 L6 13" fill="none" stroke="#333" stroke-width="2.3" /></svg>
<div class="b " style="left:1480.6px;top:993px;width:90.4px;height:23px;background:#fff"></div>
<svg class="ic" style="left:1484px;top:996px;width:16px;height:16px" viewBox="0 0 16 16" ><rect x="8" y="1.5" width="6.5" height="7" fill="#333"/><path d="M8 2.5 a3.2 1.2 0 0 1 6.5 0" fill="none" stroke="#999" stroke-width="0.7" /><rect x="5.5" y="6.5" width="3.4" height="2.6" fill="#fff" stroke="#222" stroke-width="1"/><rect x="1.5" y="11.5" width="3.4" height="2.6" fill="#fff" stroke="#222" stroke-width="1"/><rect x="7.5" y="11.5" width="3.4" height="2.6" fill="#fff" stroke="#222" stroke-width="1"/><path d="M7.2 9.1 V10.3 M3.2 11.5 V10.3 H9.2 V11.5" fill="none" stroke="#222" stroke-width="1" /></svg>
<div class="t " style="left:1503px;top:996.85px;height:16px;line-height:16px;letter-spacing:-0.42px;">DDO Explo...</div>
<svg class="ic" style="left:1575.9px;top:996px;width:16px;height:16px" viewBox="0 0 16 16" ><rect x="5" y="1.5" width="9.5" height="12" fill="#fff" stroke="#333" stroke-width="1.1"/><path d="M7 4 H13 M7 6.5 H13 M7 9 H13 M7 11.5 H13 M9.5 1.5 V13.5" fill="none" stroke="#555" stroke-width="0.9" /><path d="M2 6.5 C1.2 8.5 2.2 9.6 3.2 9.8 V14.5 M3.2 9.8 C4.3 9.5 5.2 8.5 4.4 6.5" fill="none" stroke="#111" stroke-width="1.5" /></svg>
<div class="t " style="left:1595.4px;top:996.85px;height:16px;line-height:16px;letter-spacing:-0.26px;">Properties...</div>
<div class="b " style="left:541px;top:155px;width:932px;height:652px;background:#fff"></div>
<div class="b " style="left:541px;top:155px;width:24px;height:652px;background:#d9d9e9"></div>
<div class="b " style="left:541px;top:153.2px;width:932px;height:1.6px;background:#5a9edc"></div>
<div class="t " style="left:549.5px;top:136.55px;height:16px;line-height:16px;color:#222;letter-spacing:-0.10px;">WebApp.src*</div>
<div class="t " style="left:645px;top:136.55px;height:16px;line-height:16px;color:#222;letter-spacing:-0.26px;">FeedbackCreate.wo</div>
<div class="b " style="left:769.3px;top:135.5px;width:131.7px;height:18.5px;background:#0f70c4"></div>
<div class="t " style="left:775.7px;top:136.55px;height:16px;line-height:16px;color:#fff;letter-spacing:-0.30px;">FeedbackSelect.wo*</div>
<svg class="ic" style="left:886.3px;top:138.3px;width:12px;height:12px" viewBox="0 0 16 16" ><path d="M3 3 L13 13 M13 3 L3 13" fill="none" stroke="#fff" stroke-width="2.4" /></svg>
<svg class="ic" style="left:1417px;top:136px;width:12px;height:12px" viewBox="0 0 16 16" ><path d="M10.5 2.5 L4.5 8 L10.5 13.5 Z" fill="none" stroke="#b0b0b0" stroke-width="1.2" /></svg>
<svg class="ic" style="left:1431.5px;top:136px;width:12px;height:12px" viewBox="0 0 16 16" ><path d="M5.5 2.5 L11.5 8 L5.5 13.5 Z" fill="none" stroke="#b0b0b0" stroke-width="1.2" /></svg>
<svg class="ic" style="left:1444.6px;top:136.5px;width:12px;height:12px" viewBox="0 0 16 16" ><path d="M2 5.5 H14 L8 11.5 Z" fill="#444" /></svg>
<svg class="ic" style="left:1457px;top:134px;width:16px;height:16px" viewBox="0 0 16 16" ><path d="M3 3 L13 13 M13 3 L3 13" fill="none" stroke="#333" stroke-width="1.5" /></svg>
<div class="b " style="left:1456.5px;top:161px;width:16.5px;height:646px;background:#f0f0f0"></div>
<div class="b " style="left:1457.5px;top:317px;width:14.5px;height:473px;background:#c9c9c9"></div>
<svg class="ic" style="left:1458.75px;top:163.75px;width:12px;height:12px" viewBox="0 0 16 16" ><path d="M3 10 L8 5.5 L13 10" fill="none" stroke="#333" stroke-width="2.3" /></svg>
<svg class="ic" style="left:1458.75px;top:792.25px;width:12px;height:12px" viewBox="0 0 16 16" ><path d="M3 6 L8 10.5 L13 6" fill="none" stroke="#333" stroke-width="2.3" /></svg>
<div class="b " style="left:1457.5px;top:155px;width:14.5px;height:6px;background:#c9c9c9"></div>
<div class="b " style="left:541px;top:807px;width:932px;height:18px;background:#f0f0f0"></div>
<div class="b " style="left:548px;top:807px;width:908px;height:17.5px;background:#f0f0f0"></div>
<div class="b " style="left:566px;top:808px;width:481.3px;height:15.5px;background:#c9c9c9"></div>
<svg class="ic" style="left:551.25px;top:809.75px;width:12px;height:12px" viewBox="0 0 16 16" ><path d="M10 3 L5.5 8 L10 13" fill="none" stroke="#333" stroke-width="2.3" /></svg>
<svg class="ic" style="left:1440.75px;top:809.75px;width:12px;height:12px" viewBox="0 0 16 16" ><path d="M6 3 L10.5 8 L6 13" fill="none" stroke="#333" stroke-width="2.3" /></svg>
<div class="b " style="left:541.7px;top:808.3px;width:5.6px;height:15px;background:#c9c9c9"></div>
<pre class="code" style="left:572px;top:156.7px">    <span class="k">End_Object</span>

    <span class="k">Set</span> Main_DD <span class="k">to</span> oUserFeedback_DD
    <span class="k">Set</span> Server <span class="k">to</span> oUserFeedback_DD

    <span class="k">Set</span> piColumnCount <span class="k">to</span> 12
    <span class="k">Set</span> psCaption <span class="k">to</span> <span class="s">"FeedbackSelect"</span>
    <span class="k">Set</span> pbServerOnShow <span class="k">to</span> <span class="k">True</span>

    <span class="k">Procedure</span> OnShow
        <span class="k">Send</span> <span class="k">Find</span> <span class="k">of</span> oUserFeedback_DD GE 2
    <span class="k">End_Procedure</span>

    <span class="k">Object</span> oWebMainPanel <span class="k">is</span> <span class="k">a</span> cWebPanel
        <span class="k">Set</span> piColumnCount <span class="k">to</span> 12

        <span class="k">Object</span> oSelect <span class="k">is</span> <span class="k">a</span> cWebList
            <span class="k">Set</span> piColumnSpan <span class="k">to</span> 4
            <span class="k">Set</span> pbReverseOrdering <span class="k">to</span> <span class="k">True</span>
            <span class="k">Set</span> pbFillHeight <span class="k">to</span> <span class="k">True</span>
            <span class="k">Set</span> 
        <span class="k">End_Object</span>
    <span class="k">End_Object</span>

<span class="k">End_Object</span></pre>
<div class="b " style="left:643px;top:520.3px;width:466.3px;height:166px;border:3.4px solid #e24e18"></div>
<div class="b " style="left:764px;top:636px;width:2px;height:22px;background:#000"></div>
<svg class="ic" style="left:890px;top:518px;width:21px;height:21px" viewBox="0 0 16 16" ><path d="M5 1.2 Q8 1.2 8 3.4 Q8 1.2 11 1.2 M5 14.8 Q8 14.8 8 12.6 Q8 14.8 11 14.8 M8 3 V13" fill="none" stroke="#fff" stroke-width="2.6" /><path d="M5 1.2 Q8 1.2 8 3.4 Q8 1.2 11 1.2 M5 14.8 Q8 14.8 8 12.6 Q8 14.8 11 14.8 M8 3 V13" fill="none" stroke="#000" stroke-width="1.5" /></svg>
<svg class="ic" style="left:1443px;top:833.5px;width:12px;height:12px" viewBox="0 0 16 16" ><path d="M4.8 1.6h6.4v1.5h-1v4.6h1.8v1.7H8.8V14.4H7.2V9.4H3V7.7h1.8V3.1h-1z M6.4 3.1v4.6h1.4V3.1z" fill="#1a1a1a" /></svg>
<svg class="ic" style="left:1460px;top:833.5px;width:12px;height:12px" viewBox="0 0 16 16" ><path d="M3.5 3.5 L12.5 12.5 M12.5 3.5 L3.5 12.5" fill="none" stroke="#1a1a1a" stroke-width="1.9" /></svg>
<svg class="ic" style="left:503px;top:136px;width:12px;height:12px" viewBox="0 0 16 16" ><path d="M4.8 1.6h6.4v1.5h-1v4.6h1.8v1.7H8.8V14.4H7.2V9.4H3V7.7h1.8V3.1h-1z M6.4 3.1v4.6h1.4V3.1z" fill="#1a1a1a" /></svg>
<svg class="ic" style="left:1635px;top:136px;width:12px;height:12px" viewBox="0 0 16 16" ><path d="M4.8 1.6h6.4v1.5h-1v4.6h1.8v1.7H8.8V14.4H7.2V9.4H3V7.7h1.8V3.1h-1z M6.4 3.1v4.6h1.4V3.1z" fill="#1a1a1a" /></svg>
<svg class="ic" style="left:282.5px;top:136px;width:12px;height:12px" viewBox="0 0 16 16" ><path d="M4.8 1.6h6.4v1.5h-1v4.6h1.8v1.7H8.8V14.4H7.2V9.4H3V7.7h1.8V3.1h-1z M6.4 3.1v4.6h1.4V3.1z" fill="#1a1a1a" /></svg>
<svg class="ic" style="left:300px;top:136px;width:12px;height:12px" viewBox="0 0 16 16" ><path d="M3.5 3.5 L12.5 12.5 M12.5 3.5 L3.5 12.5" fill="none" stroke="#1a1a1a" stroke-width="1.9" /></svg>
<svg class="ic" style="left:520.3px;top:136px;width:12px;height:12px" viewBox="0 0 16 16" ><path d="M3.5 3.5 L12.5 12.5 M12.5 3.5 L3.5 12.5" fill="none" stroke="#1a1a1a" stroke-width="1.9" /></svg>
<svg class="ic" style="left:1651.8px;top:136px;width:12px;height:12px" viewBox="0 0 16 16" ><path d="M3.5 3.5 L12.5 12.5 M12.5 3.5 L3.5 12.5" fill="none" stroke="#1a1a1a" stroke-width="1.9" /></svg>
<div class="b " style="left:553px;top:882px;width:1px;height:95px;background:#b6b6b6"></div>
<div class="b " style="left:568px;top:882px;width:1px;height:5px;background:#b6b6b6"></div>
<div class="b " style="left:568px;top:886.7px;width:9px;height:1px;background:#b6b6b6"></div>
<div class="b " style="left:553px;top:905px;width:7px;height:1px;background:#b6b6b6"></div>
<div class="b " style="left:553px;top:923px;width:7px;height:1px;background:#b6b6b6"></div>
<div class="b " style="left:553px;top:941px;width:7px;height:1px;background:#b6b6b6"></div>
<div class="b " style="left:553px;top:977px;width:7px;height:1px;background:#b6b6b6"></div>
<svg class="ic" style="left:576.7px;top:880.7px;width:12px;height:12px" viewBox="0 0 16 16" ><path d="M4.5 2 L12.5 8 L4.5 14 Z" fill="none" stroke="#555" stroke-width="1.2" /></svg>
<div class="b " style="left:579.3px;top:968.3px;width:196.7px;height:17.4px;background:#e9e9e9"></div>
<div class="t " style="left:596.7px;top:878.95px;height:16px;line-height:16px;letter-spacing:-0.13px;">Total Blocks&nbsp; : 14966</div>
<svg class="ic" style="left:560.3px;top:897px;width:16px;height:16px" viewBox="0 0 16 16" ><circle cx="8" cy="8" r="7" fill="#222" stroke="#222" stroke-width="0.6"/><rect x="4.6" y="4.6" width="6.8" height="6.8" rx="1.6" fill="#fff"/></svg>
<div class="t " style="left:581.7px;top:897.25px;height:16px;line-height:16px;letter-spacing:0.27px;">----Compile Finished----</div>
<svg class="ic" style="left:560.3px;top:915px;width:16px;height:16px" viewBox="0 0 16 16" ><circle cx="8" cy="8" r="7" fill="#222" stroke="#222" stroke-width="0.6"/><rect x="4.6" y="4.6" width="6.8" height="6.8" rx="1.6" fill="#fff"/></svg>
<div class="t " style="left:581.7px;top:915.25px;height:16px;line-height:16px;letter-spacing:0.07px;">----Executable written: C:\dev\repo\Editor-Sample\Programs\WebApp.exe</div>
<svg class="ic" style="left:560.3px;top:933px;width:16px;height:16px" viewBox="0 0 16 16" ><circle cx="8" cy="8" r="7.2" fill="#1e88d8" stroke="#1478c8" stroke-width="0.8"/><rect x="7" y="6.6" width="2" height="6" fill="#fff"/><rect x="7" y="3.2" width="2" height="2.1" fill="#fff"/></svg>
<div class="t " style="left:581.7px;top:933.25px;height:16px;line-height:16px;letter-spacing:-0.08px;">Starting web application: Editor Sample</div>
<svg class="ic" style="left:560.3px;top:951px;width:16px;height:16px" viewBox="0 0 16 16" ><circle cx="8" cy="8" r="7.2" fill="#22aa22" stroke="#159a15" stroke-width="0.8"/><path d="M5.8 3.8 L12.2 8 L5.8 12.2 Z" fill="#fff" /></svg>
<div class="t " style="left:581.7px;top:951.25px;height:16px;line-height:16px;letter-spacing:0.16px;">----Loading Program In Debugger----</div>
<svg class="ic" style="left:560.3px;top:969px;width:16px;height:16px" viewBox="0 0 16 16" ><circle cx="8" cy="8" r="7" fill="#222" stroke="#222" stroke-width="0.6"/><rect x="4.6" y="4.6" width="6.8" height="6.8" rx="1.6" fill="#fff"/></svg>
<div class="t " style="left:581.7px;top:969.25px;height:16px;line-height:16px;letter-spacing:0.14px;">----Exiting Program In Debugger----</div>
<div class="b " style="left:548.2px;top:955px;width:9px;height:9px;background:#fff;border:1px solid #9a9a9a"></div>
<div class="b " style="left:550.2px;top:959px;width:5px;height:1px;background:#3c4fa0"></div>
<div class="b " style="left:552.2px;top:957px;width:1px;height:5px;background:#3c4fa0"></div>
<div class="b " style="left:1457px;top:878px;width:15.5px;height:112px;background:#f0f0f0"></div>
<div class="b " style="left:1458px;top:956.2px;width:13.5px;height:16.2px;background:#c9c9c9"></div>
<svg class="ic" style="left:1458.75px;top:880.25px;width:12px;height:12px" viewBox="0 0 16 16" ><path d="M3 10 L8 5.5 L13 10" fill="none" stroke="#333" stroke-width="2.3" /></svg>
<svg class="ic" style="left:1458.75px;top:975.75px;width:12px;height:12px" viewBox="0 0 16 16" ><path d="M3 6 L8 10.5 L13 6" fill="none" stroke="#333" stroke-width="2.3" /></svg>
<svg class="ic" style="left:546px;top:996px;width:16px;height:16px" viewBox="0 0 16 16" ><rect x="1.5" y="2.5" width="13.5" height="11.5" fill="#fff" stroke="#222" stroke-width="1.2"/><rect x="1" y="2" width="14.5" height="2.4" fill="#111"/><path d="M5 6 L8.6 12.8 H1.4 Z" fill="#f2d024" /><path d="M5 8.3 V10.5 M5 11.3 V12.2" fill="none" stroke="#222" stroke-width="1" /><path d="M9.3 9.6 L11 11.5 L13.8 6.8" fill="none" stroke="#222" stroke-width="1.4" /></svg>
<div class="t " style="left:565.7px;top:996.85px;height:16px;line-height:16px;letter-spacing:-0.05px;">Problem Resolution [WebApp.src]</div>
<div class="b " style="left:747.3px;top:993px;width:68px;height:23px;background:#fff"></div>
<svg class="ic" style="left:751px;top:996px;width:16px;height:16px" viewBox="0 0 16 16" ><path d="M9.5 2 H2.5 V14 H9.5" fill="none" stroke="#333" stroke-width="1.3" /><path d="M5.5 8 H13.5 M10.3 4.3 L14 8 L10.3 11.7" fill="none" stroke="#111" stroke-width="1.9" /></svg>
<div class="t " style="left:770.7px;top:996.85px;height:16px;line-height:16px;letter-spacing:0.25px;">Output</div>
<svg class="ic" style="left:819.3px;top:996px;width:16px;height:16px" viewBox="0 0 16 16" ><rect x="3" y="3.5" width="9.5" height="11" fill="#fff" stroke="#333" stroke-width="1.2"/><path d="M5.8 3.5 C5.8 0.8 9.8 0.8 9.8 3.5" fill="none" stroke="#333" stroke-width="1.2" /><path d="M5.3 9.3 L7.2 11.4 L11.5 5.6" fill="none" stroke="#222" stroke-width="1.5" /></svg>
<div class="t " style="left:838.3px;top:996.85px;height:16px;line-height:16px;letter-spacing:-0.13px;">To Do List [WebApp.src]</div>
<div class="b " style="left:0px;top:1040px;width:1920px;height:40px;background:#c9e2ee"></div>
<svg class="ic" style="left:15.5px;top:1051px;width:18px;height:18px" viewBox="0 0 16 16" ><path d="M0 2.3 L6.6 1.4 V7.6 H0 Z M7.4 1.3 L16 0 V7.6 H7.4 Z M0 8.4 H6.6 V14.6 L0 13.7 Z M7.4 8.4 H16 V16 L7.4 14.7 Z" fill="#000" /></svg>
</body></html>
